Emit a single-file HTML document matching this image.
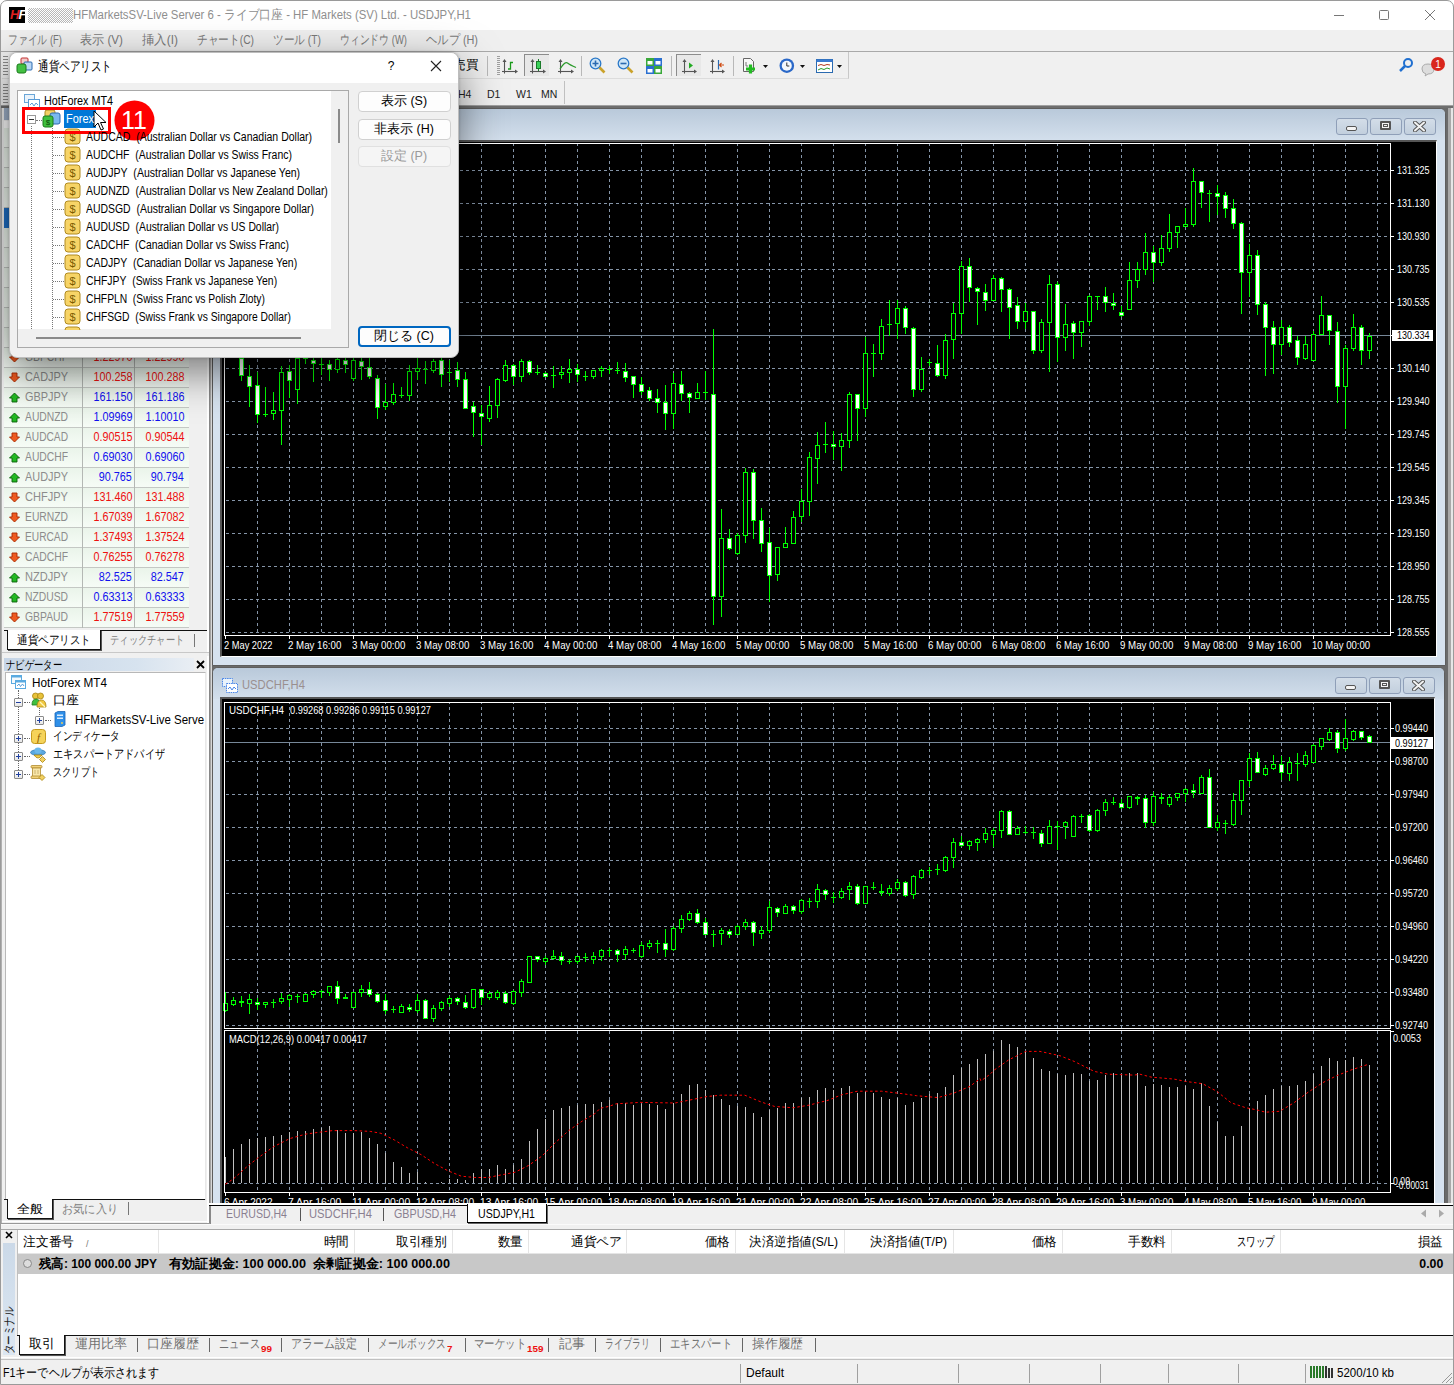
<!DOCTYPE html><html><head><meta charset="utf-8"><style>
html,body{margin:0;padding:0}
body{width:1454px;height:1385px;position:relative;overflow:hidden;background:#f0f0f0;font-family:"Liberation Sans",sans-serif;}
body div{position:absolute;box-sizing:border-box}
.t{white-space:nowrap}
svg{position:absolute}
</style></head><body>
<div style="left:0px;top:0px;width:1454px;height:30px;background:#fff;"></div>
<div style="left:0px;top:0px;width:1454px;height:1385px;border:1px solid #9a9a9a;border-radius:7px 7px 0 0;pointer-events:none;z-index:50;"></div>
<div style="left:9px;top:7px;width:16px;height:16px;background:#000;"></div>
<div class="t" style="left:10px;top:6px;font-size:13px;line-height:18px;font-style:italic;font-weight:bold;letter-spacing:-1px;"><span style="color:#e02020">H</span><span style="color:#fff">F</span></div>
<div style="left:28px;top:8px;width:45px;height:15px;background:repeating-conic-gradient(#b8b8b8 0 25%,#fff 0 50%) 0 0/2px 2px;"></div>
<div class="t" style="top:7.0px;font-size:12.5px;line-height:17px;color:#8f8f8f;left:73px;transform-origin:0 0;transform:scaleX(0.909);">HFMarketsSV-Live Server 6 - ライブ口座 - HF Markets (SV) Ltd. - USDJPY,H1</div>
<div style="left:1334px;top:15px;width:10px;height:1px;background:#777;"></div>
<div style="left:1379px;top:10px;width:10px;height:10px;border:1px solid #777;border-radius:1.5px;"></div>
<svg style="left:1424px;top:9px" width="12" height="12"><path d="M1 1L11 11M11 1L1 11" stroke="#777" stroke-width="1"/></svg>
<div style="left:0px;top:30px;width:1454px;height:21px;background:#f0f0f0;"></div>
<div style="left:0px;top:51px;width:1454px;height:1px;background:#a9a9a9;"></div>
<div class="t" style="top:32.0px;font-size:12.5px;line-height:17px;color:#7a7a7a;left:8px;transform-origin:0 0;transform:scaleX(0.756);">ファイル (F)</div>
<div class="t" style="top:32.0px;font-size:12.5px;line-height:17px;color:#7a7a7a;left:80px;transform-origin:0 0;transform:scaleX(0.932);">表示 (V)</div>
<div class="t" style="top:32.0px;font-size:12.5px;line-height:17px;color:#7a7a7a;left:142px;transform-origin:0 0;transform:scaleX(0.952);">挿入(I)</div>
<div class="t" style="top:32.0px;font-size:12.5px;line-height:17px;color:#7a7a7a;left:197px;transform-origin:0 0;transform:scaleX(0.822);">チャート(C)</div>
<div class="t" style="top:32.0px;font-size:12.5px;line-height:17px;color:#7a7a7a;left:273px;transform-origin:0 0;transform:scaleX(0.821);">ツール (T)</div>
<div class="t" style="top:32.0px;font-size:12.5px;line-height:17px;color:#7a7a7a;left:340px;transform-origin:0 0;transform:scaleX(0.756);">ウィンドウ (W)</div>
<div class="t" style="top:32.0px;font-size:12.5px;line-height:17px;color:#7a7a7a;left:426px;transform-origin:0 0;transform:scaleX(0.869);">ヘルプ (H)</div>
<div style="left:0px;top:52px;width:1454px;height:55px;background:#f0f0f0;"></div>
<div style="left:2px;top:52px;width:847px;height:27px;border-right:1px solid #c8c8c8;border-bottom:1px solid #dcdcdc;"></div>
<div style="left:0px;top:105px;width:1454px;height:1px;background:#a0a0a0;"></div>
<div style="left:0px;top:106px;width:1454px;height:2px;background:#6e6e6e;"></div>
<div style="left:3px;top:56px;width:5px;height:19px;background:repeating-linear-gradient(#8a8a8a 0 1px,transparent 1px 3px);"></div>
<div style="left:3px;top:84px;width:5px;height:19px;background:repeating-linear-gradient(#8a8a8a 0 1px,transparent 1px 3px);"></div>
<div style="left:487px;top:56px;width:1px;height:20px;background:#b8b8b8;"></div>
<div style="left:581px;top:56px;width:1px;height:20px;background:#b8b8b8;"></div>
<div style="left:671px;top:56px;width:1px;height:20px;background:#b8b8b8;"></div>
<div style="left:733px;top:56px;width:1px;height:20px;background:#b8b8b8;"></div>
<div style="left:497px;top:56px;width:3px;height:20px;background:repeating-linear-gradient(#a0a0a0 0 1px,transparent 1px 2px);"></div>
<div class="t" style="top:56.0px;font-size:13px;line-height:18px;color:#000;left:453px;transform-origin:0 0;transform:scaleX(0.962);">売買</div>
<div style="left:524px;top:54px;width:25px;height:22px;background:#e8e8e8;border-top:1px solid #8c8c8c;border-left:1px solid #8c8c8c;"></div>
<div style="left:676px;top:54px;width:25px;height:22px;background:#e8e8e8;border-top:1px solid #8c8c8c;border-left:1px solid #8c8c8c;"></div>

<svg style="left:495px;top:52px" width="360" height="28">
 <defs><marker id="ah" markerWidth="4" markerHeight="4" refX="2" refY="2" orient="auto"><path d="M0 0L4 2 0 4z" fill="#555"/></marker></defs>
 <g stroke="#555" stroke-width="1.1" fill="none">
  <path d="M9.5 21.5V9"/><path d="M7 19.5H21"/>
  <path d="M37.5 21.5V9"/><path d="M35 19.5H49"/>
  <path d="M65.5 21.5V9"/><path d="M63 19.5H77"/>
  <path d="M189.5 21.5V9"/><path d="M187 19.5H200"/>
  <path d="M217.5 21.5V9"/><path d="M215 19.5H228"/>
 </g>
 <g fill="#555"><path d="M7.5 10l2-3 2 3z"/><path d="M20 17.5l3 2-3 2z"/><path d="M35.5 10l2-3 2 3z"/><path d="M48 17.5l3 2-3 2z"/><path d="M63.5 10l2-3 2 3z"/><path d="M76 17.5l3 2-3 2z"/>
 <path d="M187.5 10l2-3 2 3z"/><path d="M199 17.5l3 2-3 2z"/><path d="M215.5 10l2-3 2 3z"/><path d="M227 17.5l3 2-3 2z"/></g>
 <path d="M13 17h2.5V10.5h2.5" stroke="#1a9a1a" stroke-width="1.3" fill="none"/>
 <rect x="41.5" y="9.5" width="4" height="7" fill="#3bd15a" stroke="#1a7a2a"/><path d="M43.5 7v2.5M43.5 16.5V19" stroke="#1a7a2a"/>
 <path d="M65 17Q70 9 72.5 11T81 15.5" stroke="#2a9a2a" stroke-width="1.3" fill="none"/>
 <circle cx="100.5" cy="11.5" r="5.3" fill="#cfe6f7" stroke="#2a78c8" stroke-width="1.3"/><path d="M97.5 11.5h6M100.5 8.5v6" stroke="#2a6ab0" stroke-width="1.6"/><path d="M104.5 15.5l5 5" stroke="#caa22a" stroke-width="2.6"/>
 <circle cx="128.5" cy="11.5" r="5.3" fill="#cfe6f7" stroke="#2a78c8" stroke-width="1.3"/><path d="M125.5 11.5h6" stroke="#2a6ab0" stroke-width="1.6"/><path d="M132.5 15.5l5 5" stroke="#caa22a" stroke-width="2.6"/>
 <rect x="151" y="6" width="8" height="8" fill="#3aa83a"/><rect x="159" y="6" width="8" height="8" fill="#2a6fd0"/><rect x="151" y="14" width="8" height="8" fill="#2a6fd0"/><rect x="159" y="14" width="8" height="8" fill="#3aa83a"/>
 <rect x="152.5" y="9" width="5" height="3.5" fill="#fff"/><rect x="160.5" y="9" width="5" height="3.5" fill="#fff"/><rect x="152.5" y="17" width="5" height="3.5" fill="#fff"/><rect x="160.5" y="17" width="5" height="3.5" fill="#fff"/>
 <path d="M194 10.5v6l4-3z" fill="#22aa22"/>
 <path d="M223.5 8v9.5" stroke="#2a6ab0" stroke-width="1.2"/><path d="M229 13h-4M226.5 11l-2 2 2 2" stroke="#d04a10" stroke-width="1.1" fill="none"/>
 <path d="M248.5 6.5h7l3 3v10h-10z" fill="#f8f8f8" stroke="#666"/><path d="M251 10v4h2" stroke="#777" fill="none"/>
 <path d="M255.5 12.5v9M251 17h9" stroke="#22bb22" stroke-width="3.2"/>
 <path d="M268 13h5l-2.5 3z" fill="#111"/>
 <circle cx="291.8" cy="13.7" r="7.3" fill="#2a68c8"/><circle cx="291.8" cy="13.7" r="5" fill="#f4f8fc"/><path d="M291.8 10.5v3.5h2.5" stroke="#333" fill="none"/>
 <path d="M305 13h5l-2.5 3z" fill="#111"/>
 <rect x="321.5" y="7.5" width="16" height="13" fill="#fff" stroke="#2a6ab0"/><rect x="321.5" y="7.5" width="16" height="2.5" fill="#3a7ad0"/><path d="M323 13.5l3-1 3 1 3-1 3 0.5" stroke="#b03a20" fill="none"/><path d="M323 18l3-1.5 3 1 3-1.5 3 1" stroke="#2a9a2a" fill="none"/>
 <path d="M342 13h5l-2.5 3z" fill="#111"/>
</svg>
<div class="t" style="top:86.5px;font-size:10.5px;line-height:14px;color:#222;left:458px;transform-origin:0 0;">H4</div>
<div class="t" style="top:86.5px;font-size:10.5px;line-height:14px;color:#222;left:487px;transform-origin:0 0;">D1</div>
<div class="t" style="top:86.5px;font-size:10.5px;line-height:14px;color:#222;left:516px;transform-origin:0 0;">W1</div>
<div class="t" style="top:86.5px;font-size:10.5px;line-height:14px;color:#222;left:541px;transform-origin:0 0;">MN</div>
<div style="left:564px;top:81px;width:1px;height:23px;background:#c0c0c0;"></div>
<svg style="left:1395px;top:56px" width="55" height="22"><circle cx="13" cy="7" r="4" fill="none" stroke="#1f6fd0" stroke-width="2"/><path d="M10 10l-5 5" stroke="#1f6fd0" stroke-width="2.5"/><path d="M27 13q0-5 6-5t6 5-6 5l-3 2 1-2q-4-1-4-5z" fill="#ddd" stroke="#aaa"/><circle cx="43" cy="8" r="7" fill="#d9261c"/><text x="43" y="12" font-size="10" fill="#fff" text-anchor="middle" font-family="Liberation Sans">1</text></svg>
<div style="left:0px;top:108px;width:210px;height:1117px;background:#f0f0f0;"></div>
<div style="left:0px;top:108px;width:2px;height:1117px;background:#b0b0b0;"></div>
<div style="left:207px;top:108px;width:2px;height:1116px;background:#fff;"></div>
<div style="left:209px;top:108px;width:2px;height:1116px;background:linear-gradient(90deg,#7a7a7a,#b0b0b0);"></div>
<div style="left:211px;top:108px;width:1px;height:1116px;background:#d8d8d8;"></div>
<div style="left:4px;top:140px;width:185px;height:487px;background:linear-gradient(90deg,#f6fbf6,#e9f5e9);"></div>
<div style="left:4px;top:108px;width:203px;height:12px;background:linear-gradient(90deg,#9fb1c9,#c9d6e6);"></div>
<div style="left:4px;top:121px;width:185px;height:25px;background:#fff;border-bottom:1px solid #c8c8c8;"></div>
<div style="left:4px;top:128px;width:185px;height:20px;background:linear-gradient(#eaf4ea,#f6fcf6);border-bottom:1px solid #c4c8c4;"></div>
<div style="left:4px;top:148px;width:185px;height:20px;background:linear-gradient(#eaf4ea,#f6fcf6);border-bottom:1px solid #c4c8c4;"></div>
<div style="left:4px;top:168px;width:185px;height:20px;background:linear-gradient(#eaf4ea,#f6fcf6);border-bottom:1px solid #c4c8c4;"></div>
<div style="left:4px;top:188px;width:185px;height:20px;background:linear-gradient(#eaf4ea,#f6fcf6);border-bottom:1px solid #c4c8c4;"></div>
<div style="left:4px;top:208px;width:185px;height:20px;background:linear-gradient(#eaf4ea,#f6fcf6);border-bottom:1px solid #c4c8c4;"></div>
<div style="left:4px;top:228px;width:185px;height:20px;background:linear-gradient(#eaf4ea,#f6fcf6);border-bottom:1px solid #c4c8c4;"></div>
<div style="left:4px;top:248px;width:185px;height:20px;background:linear-gradient(#eaf4ea,#f6fcf6);border-bottom:1px solid #c4c8c4;"></div>
<div style="left:4px;top:268px;width:185px;height:20px;background:linear-gradient(#eaf4ea,#f6fcf6);border-bottom:1px solid #c4c8c4;"></div>
<div style="left:4px;top:288px;width:185px;height:20px;background:linear-gradient(#eaf4ea,#f6fcf6);border-bottom:1px solid #c4c8c4;"></div>
<div style="left:4px;top:308px;width:185px;height:20px;background:linear-gradient(#eaf4ea,#f6fcf6);border-bottom:1px solid #c4c8c4;"></div>
<div style="left:4px;top:328px;width:185px;height:20px;background:linear-gradient(#eaf4ea,#f6fcf6);border-bottom:1px solid #c4c8c4;"></div>
<div style="left:4px;top:208px;width:185px;height:20px;background:#1f6fc5;"></div>
<div style="left:4px;top:348px;width:185px;height:20px;background:linear-gradient(#eaf4ea,#f6fcf6);border-bottom:1px solid #c4c8c4;"></div>
<svg style="left:9px;top:351.5px" width="11" height="11"><path d="M3 1h5v4h2.5L5.5 10 0.5 5H3z" fill="#ee5a20" stroke="#a82800" stroke-width="0.9"/></svg>
<div class="t" style="top:348.5px;font-size:12px;line-height:16px;color:#8c8c8c;left:25px;transform-origin:0 0;transform:scaleX(0.860);">GBPCHF</div>
<div class="t" style="top:348.5px;font-size:12px;line-height:16px;color:#ee1111;right:1322px;transform-origin:100% 0;transform:scaleX(0.899);">1.22970</div>
<div class="t" style="top:348.5px;font-size:12px;line-height:16px;color:#ee1111;right:1270px;transform-origin:100% 0;transform:scaleX(0.899);">1.22990</div>
<div style="left:4px;top:368px;width:185px;height:20px;background:linear-gradient(#eaf4ea,#f6fcf6);border-bottom:1px solid #c4c8c4;"></div>
<svg style="left:9px;top:371.5px" width="11" height="11"><path d="M3 1h5v4h2.5L5.5 10 0.5 5H3z" fill="#ee5a20" stroke="#a82800" stroke-width="0.9"/></svg>
<div class="t" style="top:368.5px;font-size:12px;line-height:16px;color:#8c8c8c;left:25px;transform-origin:0 0;transform:scaleX(0.908);">CADJPY</div>
<div class="t" style="top:368.5px;font-size:12px;line-height:16px;color:#ee1111;right:1322px;transform-origin:100% 0;transform:scaleX(0.899);">100.258</div>
<div class="t" style="top:368.5px;font-size:12px;line-height:16px;color:#ee1111;right:1270px;transform-origin:100% 0;transform:scaleX(0.899);">100.288</div>
<div style="left:4px;top:388px;width:185px;height:20px;background:linear-gradient(#eaf4ea,#f6fcf6);border-bottom:1px solid #c4c8c4;"></div>
<svg style="left:9px;top:391.5px" width="11" height="11"><path d="M3 10h5V6h2.5L5.5 1 0.5 6H3z" fill="#22b822" stroke="#0a600a" stroke-width="0.9"/></svg>
<div class="t" style="top:388.5px;font-size:12px;line-height:16px;color:#8c8c8c;left:25px;transform-origin:0 0;transform:scaleX(0.908);">GBPJPY</div>
<div class="t" style="top:388.5px;font-size:12px;line-height:16px;color:#1111ee;right:1322px;transform-origin:100% 0;transform:scaleX(0.899);">161.150</div>
<div class="t" style="top:388.5px;font-size:12px;line-height:16px;color:#1111ee;right:1270px;transform-origin:100% 0;transform:scaleX(0.899);">161.186</div>
<div style="left:4px;top:408px;width:185px;height:20px;background:linear-gradient(#eaf4ea,#f6fcf6);border-bottom:1px solid #c4c8c4;"></div>
<svg style="left:9px;top:411.5px" width="11" height="11"><path d="M3 10h5V6h2.5L5.5 1 0.5 6H3z" fill="#22b822" stroke="#0a600a" stroke-width="0.9"/></svg>
<div class="t" style="top:408.5px;font-size:12px;line-height:16px;color:#8c8c8c;left:25px;transform-origin:0 0;transform:scaleX(0.860);">AUDNZD</div>
<div class="t" style="top:408.5px;font-size:12px;line-height:16px;color:#1111ee;right:1322px;transform-origin:100% 0;transform:scaleX(0.899);">1.09969</div>
<div class="t" style="top:408.5px;font-size:12px;line-height:16px;color:#1111ee;right:1270px;transform-origin:100% 0;transform:scaleX(0.899);">1.10010</div>
<div style="left:4px;top:428px;width:185px;height:20px;background:linear-gradient(#eaf4ea,#f6fcf6);border-bottom:1px solid #c4c8c4;"></div>
<svg style="left:9px;top:431.5px" width="11" height="11"><path d="M3 1h5v4h2.5L5.5 10 0.5 5H3z" fill="#ee5a20" stroke="#a82800" stroke-width="0.9"/></svg>
<div class="t" style="top:428.5px;font-size:12px;line-height:16px;color:#8c8c8c;left:25px;transform-origin:0 0;transform:scaleX(0.849);">AUDCAD</div>
<div class="t" style="top:428.5px;font-size:12px;line-height:16px;color:#ee1111;right:1322px;transform-origin:100% 0;transform:scaleX(0.899);">0.90515</div>
<div class="t" style="top:428.5px;font-size:12px;line-height:16px;color:#ee1111;right:1270px;transform-origin:100% 0;transform:scaleX(0.899);">0.90544</div>
<div style="left:4px;top:448px;width:185px;height:20px;background:linear-gradient(#eaf4ea,#f6fcf6);border-bottom:1px solid #c4c8c4;"></div>
<svg style="left:9px;top:451.5px" width="11" height="11"><path d="M3 10h5V6h2.5L5.5 1 0.5 6H3z" fill="#22b822" stroke="#0a600a" stroke-width="0.9"/></svg>
<div class="t" style="top:448.5px;font-size:12px;line-height:16px;color:#8c8c8c;left:25px;transform-origin:0 0;transform:scaleX(0.860);">AUDCHF</div>
<div class="t" style="top:448.5px;font-size:12px;line-height:16px;color:#1111ee;right:1322px;transform-origin:100% 0;transform:scaleX(0.899);">0.69030</div>
<div class="t" style="top:448.5px;font-size:12px;line-height:16px;color:#1111ee;right:1270px;transform-origin:100% 0;transform:scaleX(0.899);">0.69060</div>
<div style="left:4px;top:468px;width:185px;height:20px;background:linear-gradient(#eaf4ea,#f6fcf6);border-bottom:1px solid #c4c8c4;"></div>
<svg style="left:9px;top:471.5px" width="11" height="11"><path d="M3 10h5V6h2.5L5.5 1 0.5 6H3z" fill="#22b822" stroke="#0a600a" stroke-width="0.9"/></svg>
<div class="t" style="top:468.5px;font-size:12px;line-height:16px;color:#8c8c8c;left:25px;transform-origin:0 0;transform:scaleX(0.908);">AUDJPY</div>
<div class="t" style="top:468.5px;font-size:12px;line-height:16px;color:#1111ee;right:1322px;transform-origin:100% 0;transform:scaleX(0.899);">90.765</div>
<div class="t" style="top:468.5px;font-size:12px;line-height:16px;color:#1111ee;right:1270px;transform-origin:100% 0;transform:scaleX(0.899);">90.794</div>
<div style="left:4px;top:488px;width:185px;height:20px;background:linear-gradient(#eaf4ea,#f6fcf6);border-bottom:1px solid #c4c8c4;"></div>
<svg style="left:9px;top:491.5px" width="11" height="11"><path d="M3 1h5v4h2.5L5.5 10 0.5 5H3z" fill="#ee5a20" stroke="#a82800" stroke-width="0.9"/></svg>
<div class="t" style="top:488.5px;font-size:12px;line-height:16px;color:#8c8c8c;left:25px;transform-origin:0 0;transform:scaleX(0.921);">CHFJPY</div>
<div class="t" style="top:488.5px;font-size:12px;line-height:16px;color:#ee1111;right:1322px;transform-origin:100% 0;transform:scaleX(0.899);">131.460</div>
<div class="t" style="top:488.5px;font-size:12px;line-height:16px;color:#ee1111;right:1270px;transform-origin:100% 0;transform:scaleX(0.899);">131.488</div>
<div style="left:4px;top:508px;width:185px;height:20px;background:linear-gradient(#eaf4ea,#f6fcf6);border-bottom:1px solid #c4c8c4;"></div>
<svg style="left:9px;top:511.5px" width="11" height="11"><path d="M3 1h5v4h2.5L5.5 10 0.5 5H3z" fill="#ee5a20" stroke="#a82800" stroke-width="0.9"/></svg>
<div class="t" style="top:508.5px;font-size:12px;line-height:16px;color:#8c8c8c;left:25px;transform-origin:0 0;transform:scaleX(0.860);">EURNZD</div>
<div class="t" style="top:508.5px;font-size:12px;line-height:16px;color:#ee1111;right:1322px;transform-origin:100% 0;transform:scaleX(0.899);">1.67039</div>
<div class="t" style="top:508.5px;font-size:12px;line-height:16px;color:#ee1111;right:1270px;transform-origin:100% 0;transform:scaleX(0.899);">1.67082</div>
<div style="left:4px;top:528px;width:185px;height:20px;background:linear-gradient(#eaf4ea,#f6fcf6);border-bottom:1px solid #c4c8c4;"></div>
<svg style="left:9px;top:531.5px" width="11" height="11"><path d="M3 1h5v4h2.5L5.5 10 0.5 5H3z" fill="#ee5a20" stroke="#a82800" stroke-width="0.9"/></svg>
<div class="t" style="top:528.5px;font-size:12px;line-height:16px;color:#8c8c8c;left:25px;transform-origin:0 0;transform:scaleX(0.849);">EURCAD</div>
<div class="t" style="top:528.5px;font-size:12px;line-height:16px;color:#ee1111;right:1322px;transform-origin:100% 0;transform:scaleX(0.899);">1.37493</div>
<div class="t" style="top:528.5px;font-size:12px;line-height:16px;color:#ee1111;right:1270px;transform-origin:100% 0;transform:scaleX(0.899);">1.37524</div>
<div style="left:4px;top:548px;width:185px;height:20px;background:linear-gradient(#eaf4ea,#f6fcf6);border-bottom:1px solid #c4c8c4;"></div>
<svg style="left:9px;top:551.5px" width="11" height="11"><path d="M3 1h5v4h2.5L5.5 10 0.5 5H3z" fill="#ee5a20" stroke="#a82800" stroke-width="0.9"/></svg>
<div class="t" style="top:548.5px;font-size:12px;line-height:16px;color:#8c8c8c;left:25px;transform-origin:0 0;transform:scaleX(0.860);">CADCHF</div>
<div class="t" style="top:548.5px;font-size:12px;line-height:16px;color:#ee1111;right:1322px;transform-origin:100% 0;transform:scaleX(0.899);">0.76255</div>
<div class="t" style="top:548.5px;font-size:12px;line-height:16px;color:#ee1111;right:1270px;transform-origin:100% 0;transform:scaleX(0.899);">0.76278</div>
<div style="left:4px;top:568px;width:185px;height:20px;background:linear-gradient(#eaf4ea,#f6fcf6);border-bottom:1px solid #c4c8c4;"></div>
<svg style="left:9px;top:571.5px" width="11" height="11"><path d="M3 10h5V6h2.5L5.5 1 0.5 6H3z" fill="#22b822" stroke="#0a600a" stroke-width="0.9"/></svg>
<div class="t" style="top:568.5px;font-size:12px;line-height:16px;color:#8c8c8c;left:25px;transform-origin:0 0;transform:scaleX(0.921);">NZDJPY</div>
<div class="t" style="top:568.5px;font-size:12px;line-height:16px;color:#1111ee;right:1322px;transform-origin:100% 0;transform:scaleX(0.899);">82.525</div>
<div class="t" style="top:568.5px;font-size:12px;line-height:16px;color:#1111ee;right:1270px;transform-origin:100% 0;transform:scaleX(0.899);">82.547</div>
<div style="left:4px;top:588px;width:185px;height:20px;background:linear-gradient(#eaf4ea,#f6fcf6);border-bottom:1px solid #c4c8c4;"></div>
<svg style="left:9px;top:591.5px" width="11" height="11"><path d="M3 10h5V6h2.5L5.5 1 0.5 6H3z" fill="#22b822" stroke="#0a600a" stroke-width="0.9"/></svg>
<div class="t" style="top:588.5px;font-size:12px;line-height:16px;color:#8c8c8c;left:25px;transform-origin:0 0;transform:scaleX(0.860);">NZDUSD</div>
<div class="t" style="top:588.5px;font-size:12px;line-height:16px;color:#1111ee;right:1322px;transform-origin:100% 0;transform:scaleX(0.899);">0.63313</div>
<div class="t" style="top:588.5px;font-size:12px;line-height:16px;color:#1111ee;right:1270px;transform-origin:100% 0;transform:scaleX(0.899);">0.63333</div>
<div style="left:4px;top:608px;width:185px;height:20px;background:linear-gradient(#eaf4ea,#f6fcf6);border-bottom:1px solid #c4c8c4;"></div>
<svg style="left:9px;top:611.5px" width="11" height="11"><path d="M3 1h5v4h2.5L5.5 10 0.5 5H3z" fill="#ee5a20" stroke="#a82800" stroke-width="0.9"/></svg>
<div class="t" style="top:608.5px;font-size:12px;line-height:16px;color:#8c8c8c;left:25px;transform-origin:0 0;transform:scaleX(0.864);">GBPAUD</div>
<div class="t" style="top:608.5px;font-size:12px;line-height:16px;color:#ee1111;right:1322px;transform-origin:100% 0;transform:scaleX(0.899);">1.77519</div>
<div class="t" style="top:608.5px;font-size:12px;line-height:16px;color:#ee1111;right:1270px;transform-origin:100% 0;transform:scaleX(0.899);">1.77559</div>
<div style="left:82px;top:121px;width:1px;height:507px;background:#b4b8b4;"></div>
<div style="left:134px;top:121px;width:1px;height:507px;background:#b4b8b4;"></div>
<div style="left:4px;top:630px;width:203px;height:1px;background:#111;"></div>
<div style="left:7px;top:630px;width:94px;height:20px;background:#fff;border:1px solid #111;border-top:none;box-shadow:1px 1px 0 #555;"></div>
<div class="t" style="top:632.0px;font-size:12px;line-height:16px;color:#000;left:17px;transform-origin:0 0;transform:scaleX(0.881);">通貨ペアリスト</div>
<div class="t" style="top:632.0px;font-size:12px;line-height:16px;color:#808080;left:110px;transform-origin:0 0;transform:scaleX(0.771);">ティックチャート</div>
<div style="left:194px;top:634px;width:1px;height:13px;background:#777;"></div>
<div style="left:2px;top:652px;width:207px;height:1px;background:#c8c8c8;"></div>
<div style="left:2px;top:653px;width:207px;height:3px;background:#f0f0f0;"></div>
<div style="left:4px;top:658px;width:190px;height:13px;background:linear-gradient(90deg,#c6d5e6,#d7e3ef 70%,#e9eef4);"></div>
<div class="t" style="top:656.5px;font-size:11.5px;line-height:16px;color:#000;left:6px;transform-origin:0 0;transform:scaleX(0.778);">ナビゲーター</div>
<svg style="left:196px;top:660px" width="9" height="9"><path d="M1 1L8 8M8 1L1 8" stroke="#000" stroke-width="1.8"/></svg>
<div style="left:5px;top:672px;width:201px;height:528px;background:#fff;border:1px solid #b8b8b8;border-right-color:#e8e8e8;"></div>
<svg style="left:11px;top:675px" width="15" height="14"><rect x="0.5" y="0.5" width="10" height="8" fill="#f4f9fd" stroke="#5aaae0"/><rect x="0.5" y="0.5" width="10" height="2" fill="#5aaae0"/><rect x="4.5" y="5.5" width="10" height="8" fill="#fff" stroke="#5aaae0"/><rect x="4.5" y="5.5" width="10" height="2" fill="#5aaae0"/><path d="M6 11l2-2 1.5 2.5 2-2.5 1.5 2" stroke="#3a8ad0" fill="none" stroke-width="0.8"/></svg>
<div class="t" style="top:675.0px;font-size:12px;line-height:16px;color:#000;left:32px;transform-origin:0 0;transform:scaleX(0.978);">HotForex MT4</div>
<div style="left:18px;top:690px;width:1px;height:84px;border-left:1px dotted #666;"></div>
<div style="left:39px;top:708px;width:1px;height:9px;border-left:1px dotted #666;"></div>
<div style="left:14px;top:698px;width:9px;height:9px;background:linear-gradient(#fff,#e6e6e6);border:1px solid #8a8a8a;border-radius:1px;"></div>
<div style="left:16px;top:702px;width:5px;height:1px;background:#1f3f9f;"></div>
<div style="left:24px;top:702px;width:6px;height:1px;border-top:1px dotted #666;"></div>
<div style="left:35px;top:716px;width:9px;height:9px;background:linear-gradient(#fff,#e6e6e6);border:1px solid #8a8a8a;border-radius:1px;"></div>
<div style="left:37px;top:720px;width:5px;height:1px;background:#1f3f9f;"></div>
<div style="left:39px;top:718px;width:1px;height:5px;background:#1f3f9f;"></div>
<div style="left:45px;top:720px;width:6px;height:1px;border-top:1px dotted #666;"></div>
<div style="left:14px;top:734px;width:9px;height:9px;background:linear-gradient(#fff,#e6e6e6);border:1px solid #8a8a8a;border-radius:1px;"></div>
<div style="left:16px;top:738px;width:5px;height:1px;background:#1f3f9f;"></div>
<div style="left:18px;top:736px;width:1px;height:5px;background:#1f3f9f;"></div>
<div style="left:24px;top:738px;width:6px;height:1px;border-top:1px dotted #666;"></div>
<div style="left:14px;top:752px;width:9px;height:9px;background:linear-gradient(#fff,#e6e6e6);border:1px solid #8a8a8a;border-radius:1px;"></div>
<div style="left:16px;top:756px;width:5px;height:1px;background:#1f3f9f;"></div>
<div style="left:18px;top:754px;width:1px;height:5px;background:#1f3f9f;"></div>
<div style="left:24px;top:756px;width:6px;height:1px;border-top:1px dotted #666;"></div>
<div style="left:14px;top:770px;width:9px;height:9px;background:linear-gradient(#fff,#e6e6e6);border:1px solid #8a8a8a;border-radius:1px;"></div>
<div style="left:16px;top:774px;width:5px;height:1px;background:#1f3f9f;"></div>
<div style="left:18px;top:772px;width:1px;height:5px;background:#1f3f9f;"></div>
<div style="left:24px;top:774px;width:6px;height:1px;border-top:1px dotted #666;"></div>
<svg style="left:30px;top:692px" width="18" height="17"><circle cx="5.5" cy="4" r="3" fill="#e8c23a" stroke="#a88410" stroke-width="0.8"/><circle cx="10.5" cy="4" r="3" fill="#e8c23a" stroke="#a88410" stroke-width="0.8"/><path d="M2 13q0-6 4-6t4 6z" fill="#3fbf3f" stroke="#1a7a1a" stroke-width="0.8"/><path d="M7 15q0-7 4.5-7t4.5 7z" fill="#f0c840" stroke="#a88410" stroke-width="0.8"/><path d="M10 10l5 5" stroke="#fff7c0" stroke-width="1.2"/></svg>
<div class="t" style="top:692.0px;font-size:12px;line-height:16px;color:#000;left:53px;transform-origin:0 0;transform:scaleX(1.083);">口座</div>
<svg style="left:54px;top:711px" width="12" height="16"><path d="M1 2l3-1.5h7V14l-3 1.5H1z" fill="#2f8fe8" stroke="#1a64b8" stroke-width="0.8"/><rect x="3" y="3.5" width="6" height="1.5" fill="#d8ecff"/><rect x="3" y="6.5" width="6" height="1.5" fill="#d8ecff"/><circle cx="8" cy="12" r="0.9" fill="#ffd24a"/></svg>
<div class="t" style="top:711.5px;font-size:12px;line-height:16px;color:#000;left:75px;transform-origin:0 0;transform:scaleX(0.958);">HFMarketsSV-Live Serve</div>
<svg style="left:31px;top:729px" width="15" height="15"><rect x="0.5" y="0.5" width="14" height="14" rx="3" fill="#f5d35a" stroke="#c49a1c"/><text x="7.5" y="12" font-size="11" fill="#8a5a00" text-anchor="middle" font-style="italic" font-family="Liberation Serif">f</text></svg>
<div class="t" style="top:727.8px;font-size:12px;line-height:16px;color:#000;left:53px;transform-origin:0 0;transform:scaleX(0.798);">インディケータ</div>
<svg style="left:30px;top:747px" width="18" height="16"><ellipse cx="8" cy="5.5" rx="7.5" ry="2.8" fill="#5aa8e0" stroke="#2f7ab8" stroke-width="0.8"/><ellipse cx="8" cy="3.5" rx="3.5" ry="3" fill="#6ab8ec"/><path d="M4 8q4 6 8 0z" fill="#f2cc4a" stroke="#a88410" stroke-width="0.8"/><path d="M12.5 9.5l3 3-3 3-3-3z" fill="#f2d060" stroke="#a88410" stroke-width="0.8"/></svg>
<div class="t" style="top:745.8px;font-size:12px;line-height:16px;color:#000;left:53px;transform-origin:0 0;transform:scaleX(0.848);">エキスパートアドバイザ</div>
<svg style="left:30px;top:765px" width="17" height="16"><rect x="1" y="0.5" width="11" height="2.5" rx="1" fill="#f2d27a" stroke="#b08a30" stroke-width="0.8"/><rect x="2.5" y="3" width="8" height="9" fill="#f8e6a8" stroke="#b08a30" stroke-width="0.8"/><rect x="1" y="11" width="11" height="2.5" rx="1" fill="#f2d27a" stroke="#b08a30" stroke-width="0.8"/><path d="M4.5 6h1M7.5 6h1M4.5 8h1M7.5 8h1" stroke="#a08040"/><path d="M12 9.5l3 3-3 3-3-3z" fill="#f2d060" stroke="#a88410" stroke-width="0.8"/></svg>
<div class="t" style="top:763.8px;font-size:12px;line-height:16px;color:#000;left:53px;transform-origin:0 0;transform:scaleX(0.767);">スクリプト</div>
<div style="left:4px;top:1199px;width:201px;height:1px;background:#111;"></div>
<div style="left:7px;top:1199px;width:46px;height:20px;background:#fff;border:1px solid #111;border-top:none;box-shadow:1px 1px 0 #555;"></div>
<div class="t" style="top:1201.0px;font-size:12px;line-height:16px;color:#000;left:17px;transform-origin:0 0;transform:scaleX(1.083);">全般</div>
<div class="t" style="top:1200.5px;font-size:12px;line-height:16px;color:#808080;left:62px;transform-origin:0 0;transform:scaleX(0.933);">お気に入り</div>
<div style="left:128px;top:1202px;width:1px;height:13px;background:#777;"></div>
<div style="left:2px;top:1221px;width:205px;height:1px;background:#fff;"></div>
<div style="left:212px;top:108px;width:1234px;height:1097px;background:#6a6a6a;"></div>
<div style="left:212px;top:108px;width:1234px;height:558px;background:#d6e2ef;border:1px solid #5e5e5e;border-radius:6px 6px 0 0;"></div>
<div style="left:213px;top:109px;width:1232px;height:31px;background:linear-gradient(#b9c9da,#d3dfec);border-radius:5px 5px 0 0;"></div>
<div style="left:1336px;top:118px;width:32px;height:17px;border:1px solid #8f9fb8;border-radius:3px;background:linear-gradient(#d3dde8,#c2cfdd);"></div>
<div style="left:1346px;top:126px;width:11px;height:5px;background:#f4f4f4;border:1px solid #555;border-radius:2px;"></div>
<div style="left:1370px;top:118px;width:32px;height:17px;border:1px solid #8f9fb8;border-radius:3px;background:linear-gradient(#d3dde8,#c2cfdd);"></div>
<div style="left:1380px;top:121px;width:11px;height:9px;background:#f4f4f4;border:2px solid #555;border-radius:1px;"></div><div style="left:1383px;top:124px;width:5px;height:3px;border:1px solid #555;"></div>
<div style="left:1404px;top:118px;width:32px;height:17px;border:1px solid #8f9fb8;border-radius:3px;background:linear-gradient(#d3dde8,#c2cfdd);"></div>
<svg style="left:1413px;top:121px" width="13" height="11"><path d="M2 1.5L11 9.5M11 1.5L2 9.5" stroke="#555" stroke-width="4" stroke-linecap="round"/><path d="M2 1.5L11 9.5M11 1.5L2 9.5" stroke="#f2f2f2" stroke-width="2" stroke-linecap="round"/></svg>
<svg style="left:222px;top:119px" width="16" height="15"><rect x="0.5" y="0.5" width="10" height="8" fill="#eaf3fb" stroke="#4a86e8" stroke-dasharray="1.5 0.8"/><rect x="4.5" y="5.5" width="11" height="9" fill="#fff" stroke="#4a86e8" stroke-dasharray="1.5 0.8"/><path d="M6 11l2-2 2 3 2-3 2 2" stroke="#4a86e8" fill="none"/></svg>
<div class="t" style="top:118.0px;font-size:12px;line-height:16px;color:#9a8f8f;left:242px;transform-origin:0 0;transform:scaleX(0.977);">USDJPY,H1</div>
<div style="left:220px;top:140px;width:1217px;height:517px;background:#000;border-left:2px solid #555;border-top:2px solid #555;border-right:1px solid #fff;border-bottom:1px solid #fff;"></div>
<svg style="left:222px;top:142px" width="1214" height="514" shape-rendering="crispEdges"><line x1="4" y1="28.5" x2="1168" y2="28.5" stroke="#8595a8" stroke-dasharray="3 3" stroke-dashoffset="0"/><line x1="4" y1="61.5" x2="1168" y2="61.5" stroke="#8595a8" stroke-dasharray="3 3" stroke-dashoffset="0"/><line x1="4" y1="94.5" x2="1168" y2="94.5" stroke="#8595a8" stroke-dasharray="3 3" stroke-dashoffset="0"/><line x1="4" y1="127.5" x2="1168" y2="127.5" stroke="#8595a8" stroke-dasharray="3 3" stroke-dashoffset="0"/><line x1="4" y1="160.5" x2="1168" y2="160.5" stroke="#8595a8" stroke-dasharray="3 3" stroke-dashoffset="0"/><line x1="4" y1="193.5" x2="1168" y2="193.5" stroke="#8595a8" stroke-dasharray="3 3" stroke-dashoffset="0"/><line x1="4" y1="226.5" x2="1168" y2="226.5" stroke="#8595a8" stroke-dasharray="3 3" stroke-dashoffset="0"/><line x1="4" y1="259.5" x2="1168" y2="259.5" stroke="#8595a8" stroke-dasharray="3 3" stroke-dashoffset="0"/><line x1="4" y1="292.5" x2="1168" y2="292.5" stroke="#8595a8" stroke-dasharray="3 3" stroke-dashoffset="0"/><line x1="4" y1="325.5" x2="1168" y2="325.5" stroke="#8595a8" stroke-dasharray="3 3" stroke-dashoffset="0"/><line x1="4" y1="358.5" x2="1168" y2="358.5" stroke="#8595a8" stroke-dasharray="3 3" stroke-dashoffset="0"/><line x1="4" y1="391.5" x2="1168" y2="391.5" stroke="#8595a8" stroke-dasharray="3 3" stroke-dashoffset="0"/><line x1="4" y1="424.5" x2="1168" y2="424.5" stroke="#8595a8" stroke-dasharray="3 3" stroke-dashoffset="0"/><line x1="4" y1="457.5" x2="1168" y2="457.5" stroke="#8595a8" stroke-dasharray="3 3" stroke-dashoffset="0"/><line x1="4" y1="490.5" x2="1168" y2="490.5" stroke="#8595a8" stroke-dasharray="3 3" stroke-dashoffset="0"/><line x1="35.5" y1="1" x2="35.5" y2="493" stroke="#8595a8" stroke-dasharray="3 3" stroke-dashoffset="0"/><line x1="67.5" y1="1" x2="67.5" y2="493" stroke="#8595a8" stroke-dasharray="3 3" stroke-dashoffset="0"/><line x1="99.5" y1="1" x2="99.5" y2="493" stroke="#8595a8" stroke-dasharray="3 3" stroke-dashoffset="0"/><line x1="131.5" y1="1" x2="131.5" y2="493" stroke="#8595a8" stroke-dasharray="3 3" stroke-dashoffset="0"/><line x1="163.5" y1="1" x2="163.5" y2="493" stroke="#8595a8" stroke-dasharray="3 3" stroke-dashoffset="0"/><line x1="195.5" y1="1" x2="195.5" y2="493" stroke="#8595a8" stroke-dasharray="3 3" stroke-dashoffset="0"/><line x1="227.5" y1="1" x2="227.5" y2="493" stroke="#8595a8" stroke-dasharray="3 3" stroke-dashoffset="0"/><line x1="259.5" y1="1" x2="259.5" y2="493" stroke="#8595a8" stroke-dasharray="3 3" stroke-dashoffset="0"/><line x1="291.5" y1="1" x2="291.5" y2="493" stroke="#8595a8" stroke-dasharray="3 3" stroke-dashoffset="0"/><line x1="323.5" y1="1" x2="323.5" y2="493" stroke="#8595a8" stroke-dasharray="3 3" stroke-dashoffset="0"/><line x1="355.5" y1="1" x2="355.5" y2="493" stroke="#8595a8" stroke-dasharray="3 3" stroke-dashoffset="0"/><line x1="387.5" y1="1" x2="387.5" y2="493" stroke="#8595a8" stroke-dasharray="3 3" stroke-dashoffset="0"/><line x1="419.5" y1="1" x2="419.5" y2="493" stroke="#8595a8" stroke-dasharray="3 3" stroke-dashoffset="0"/><line x1="451.5" y1="1" x2="451.5" y2="493" stroke="#8595a8" stroke-dasharray="3 3" stroke-dashoffset="0"/><line x1="483.5" y1="1" x2="483.5" y2="493" stroke="#8595a8" stroke-dasharray="3 3" stroke-dashoffset="0"/><line x1="515.5" y1="1" x2="515.5" y2="493" stroke="#8595a8" stroke-dasharray="3 3" stroke-dashoffset="0"/><line x1="547.5" y1="1" x2="547.5" y2="493" stroke="#8595a8" stroke-dasharray="3 3" stroke-dashoffset="0"/><line x1="579.5" y1="1" x2="579.5" y2="493" stroke="#8595a8" stroke-dasharray="3 3" stroke-dashoffset="0"/><line x1="611.5" y1="1" x2="611.5" y2="493" stroke="#8595a8" stroke-dasharray="3 3" stroke-dashoffset="0"/><line x1="643.5" y1="1" x2="643.5" y2="493" stroke="#8595a8" stroke-dasharray="3 3" stroke-dashoffset="0"/><line x1="675.5" y1="1" x2="675.5" y2="493" stroke="#8595a8" stroke-dasharray="3 3" stroke-dashoffset="0"/><line x1="707.5" y1="1" x2="707.5" y2="493" stroke="#8595a8" stroke-dasharray="3 3" stroke-dashoffset="0"/><line x1="739.5" y1="1" x2="739.5" y2="493" stroke="#8595a8" stroke-dasharray="3 3" stroke-dashoffset="0"/><line x1="771.5" y1="1" x2="771.5" y2="493" stroke="#8595a8" stroke-dasharray="3 3" stroke-dashoffset="0"/><line x1="803.5" y1="1" x2="803.5" y2="493" stroke="#8595a8" stroke-dasharray="3 3" stroke-dashoffset="0"/><line x1="835.5" y1="1" x2="835.5" y2="493" stroke="#8595a8" stroke-dasharray="3 3" stroke-dashoffset="0"/><line x1="867.5" y1="1" x2="867.5" y2="493" stroke="#8595a8" stroke-dasharray="3 3" stroke-dashoffset="0"/><line x1="899.5" y1="1" x2="899.5" y2="493" stroke="#8595a8" stroke-dasharray="3 3" stroke-dashoffset="0"/><line x1="931.5" y1="1" x2="931.5" y2="493" stroke="#8595a8" stroke-dasharray="3 3" stroke-dashoffset="0"/><line x1="963.5" y1="1" x2="963.5" y2="493" stroke="#8595a8" stroke-dasharray="3 3" stroke-dashoffset="0"/><line x1="995.5" y1="1" x2="995.5" y2="493" stroke="#8595a8" stroke-dasharray="3 3" stroke-dashoffset="0"/><line x1="1027.5" y1="1" x2="1027.5" y2="493" stroke="#8595a8" stroke-dasharray="3 3" stroke-dashoffset="0"/><line x1="1059.5" y1="1" x2="1059.5" y2="493" stroke="#8595a8" stroke-dasharray="3 3" stroke-dashoffset="0"/><line x1="1091.5" y1="1" x2="1091.5" y2="493" stroke="#8595a8" stroke-dasharray="3 3" stroke-dashoffset="0"/><line x1="1123.5" y1="1" x2="1123.5" y2="493" stroke="#8595a8" stroke-dasharray="3 3" stroke-dashoffset="0"/><line x1="1155.5" y1="1" x2="1155.5" y2="493" stroke="#8595a8" stroke-dasharray="3 3" stroke-dashoffset="0"/><rect x="3" y="193" width="1165" height="1" fill="#778899"/><rect x="19" y="208" width="1" height="31" fill="#00ff00"/><rect x="17" y="216" width="5" height="18" fill="#00ff00"/><rect x="18" y="217" width="3" height="16" fill="#fff"/><rect x="27" y="223" width="1" height="42" fill="#00ff00"/><rect x="25" y="234" width="5" height="11" fill="#00ff00"/><rect x="26" y="235" width="3" height="9" fill="#fff"/><rect x="35" y="230" width="1" height="51" fill="#00ff00"/><rect x="33" y="243" width="5" height="30" fill="#00ff00"/><rect x="34" y="244" width="3" height="28" fill="#fff"/><rect x="43" y="245" width="1" height="30" fill="#00ff00"/><rect x="41" y="272" width="5" height="1" fill="#00ff00"/><rect x="51" y="250" width="1" height="28" fill="#00ff00"/><rect x="49" y="268" width="5" height="4" fill="#00ff00"/><rect x="50" y="269" width="3" height="2" fill="#000"/><rect x="59" y="224" width="1" height="79" fill="#00ff00"/><rect x="57" y="230" width="5" height="39" fill="#00ff00"/><rect x="58" y="231" width="3" height="37" fill="#000"/><rect x="67" y="223" width="1" height="33" fill="#00ff00"/><rect x="65" y="229" width="5" height="10" fill="#00ff00"/><rect x="66" y="230" width="3" height="8" fill="#fff"/><rect x="75" y="208" width="1" height="54" fill="#00ff00"/><rect x="73" y="216" width="5" height="32" fill="#00ff00"/><rect x="74" y="217" width="3" height="30" fill="#000"/><rect x="83" y="210" width="1" height="12" fill="#00ff00"/><rect x="81" y="216" width="5" height="1" fill="#00ff00"/><rect x="91" y="213" width="1" height="27" fill="#00ff00"/><rect x="89" y="218" width="5" height="4" fill="#00ff00"/><rect x="90" y="219" width="3" height="2" fill="#fff"/><rect x="99" y="216" width="1" height="17" fill="#00ff00"/><rect x="97" y="222" width="5" height="1" fill="#00ff00"/><rect x="107" y="218" width="1" height="21" fill="#00ff00"/><rect x="105" y="222" width="5" height="6" fill="#00ff00"/><rect x="106" y="223" width="3" height="4" fill="#fff"/><rect x="115" y="214" width="1" height="17" fill="#00ff00"/><rect x="113" y="217" width="5" height="11" fill="#00ff00"/><rect x="114" y="218" width="3" height="9" fill="#000"/><rect x="123" y="214" width="1" height="17" fill="#00ff00"/><rect x="121" y="218" width="5" height="5" fill="#00ff00"/><rect x="122" y="219" width="3" height="3" fill="#fff"/><rect x="131" y="214" width="1" height="25" fill="#00ff00"/><rect x="129" y="218" width="5" height="19" fill="#00ff00"/><rect x="130" y="219" width="3" height="17" fill="#000"/><rect x="139" y="214" width="1" height="24" fill="#00ff00"/><rect x="137" y="219" width="5" height="6" fill="#00ff00"/><rect x="138" y="220" width="3" height="4" fill="#fff"/><rect x="147" y="216" width="1" height="21" fill="#00ff00"/><rect x="145" y="225" width="5" height="10" fill="#00ff00"/><rect x="146" y="226" width="3" height="8" fill="#fff"/><rect x="155" y="233" width="1" height="44" fill="#00ff00"/><rect x="153" y="236" width="5" height="30" fill="#00ff00"/><rect x="154" y="237" width="3" height="28" fill="#fff"/><rect x="163" y="242" width="1" height="26" fill="#00ff00"/><rect x="161" y="260" width="5" height="5" fill="#00ff00"/><rect x="162" y="261" width="3" height="3" fill="#000"/><rect x="171" y="241" width="1" height="22" fill="#00ff00"/><rect x="169" y="252" width="5" height="9" fill="#00ff00"/><rect x="170" y="253" width="3" height="7" fill="#000"/><rect x="179" y="245" width="1" height="11" fill="#00ff00"/><rect x="177" y="253" width="5" height="1" fill="#00ff00"/><rect x="187" y="223" width="1" height="36" fill="#00ff00"/><rect x="185" y="229" width="5" height="25" fill="#00ff00"/><rect x="186" y="230" width="3" height="23" fill="#000"/><rect x="195" y="216" width="1" height="22" fill="#00ff00"/><rect x="193" y="226" width="5" height="4" fill="#00ff00"/><rect x="194" y="227" width="3" height="2" fill="#000"/><rect x="203" y="219" width="1" height="23" fill="#00ff00"/><rect x="201" y="227" width="5" height="1" fill="#00ff00"/><rect x="211" y="217" width="1" height="14" fill="#00ff00"/><rect x="209" y="219" width="5" height="10" fill="#00ff00"/><rect x="210" y="220" width="3" height="8" fill="#000"/><rect x="219" y="213" width="1" height="32" fill="#00ff00"/><rect x="217" y="218" width="5" height="15" fill="#00ff00"/><rect x="218" y="219" width="3" height="13" fill="#fff"/><rect x="227" y="218" width="1" height="22" fill="#00ff00"/><rect x="225" y="230" width="5" height="1" fill="#00ff00"/><rect x="235" y="220" width="1" height="25" fill="#00ff00"/><rect x="233" y="228" width="5" height="10" fill="#00ff00"/><rect x="234" y="229" width="3" height="8" fill="#fff"/><rect x="243" y="230" width="1" height="37" fill="#00ff00"/><rect x="241" y="237" width="5" height="30" fill="#00ff00"/><rect x="242" y="238" width="3" height="28" fill="#fff"/><rect x="251" y="260" width="1" height="35" fill="#00ff00"/><rect x="249" y="264" width="5" height="7" fill="#00ff00"/><rect x="250" y="265" width="3" height="5" fill="#fff"/><rect x="259" y="263" width="1" height="40" fill="#00ff00"/><rect x="257" y="271" width="5" height="4" fill="#00ff00"/><rect x="258" y="272" width="3" height="2" fill="#fff"/><rect x="267" y="244" width="1" height="36" fill="#00ff00"/><rect x="265" y="263" width="5" height="14" fill="#00ff00"/><rect x="266" y="264" width="3" height="12" fill="#000"/><rect x="275" y="236" width="1" height="40" fill="#00ff00"/><rect x="273" y="237" width="5" height="27" fill="#00ff00"/><rect x="274" y="238" width="3" height="25" fill="#000"/><rect x="283" y="218" width="1" height="22" fill="#00ff00"/><rect x="281" y="223" width="5" height="16" fill="#00ff00"/><rect x="282" y="224" width="3" height="14" fill="#000"/><rect x="291" y="222" width="1" height="21" fill="#00ff00"/><rect x="289" y="223" width="5" height="12" fill="#00ff00"/><rect x="290" y="224" width="3" height="10" fill="#fff"/><rect x="299" y="217" width="1" height="23" fill="#00ff00"/><rect x="297" y="219" width="5" height="16" fill="#00ff00"/><rect x="298" y="220" width="3" height="14" fill="#000"/><rect x="307" y="218" width="1" height="15" fill="#00ff00"/><rect x="305" y="219" width="5" height="12" fill="#00ff00"/><rect x="306" y="220" width="3" height="10" fill="#fff"/><rect x="315" y="223" width="1" height="10" fill="#00ff00"/><rect x="313" y="230" width="5" height="1" fill="#00ff00"/><rect x="323" y="230" width="1" height="5" fill="#00ff00"/><rect x="321" y="231" width="5" height="4" fill="#00ff00"/><rect x="322" y="232" width="3" height="2" fill="#fff"/><rect x="331" y="224" width="1" height="22" fill="#00ff00"/><rect x="329" y="233" width="5" height="1" fill="#00ff00"/><rect x="339" y="224" width="1" height="13" fill="#00ff00"/><rect x="337" y="230" width="5" height="3" fill="#00ff00"/><rect x="338" y="231" width="3" height="1" fill="#000"/><rect x="347" y="217" width="1" height="24" fill="#00ff00"/><rect x="345" y="227" width="5" height="4" fill="#00ff00"/><rect x="346" y="228" width="3" height="2" fill="#000"/><rect x="355" y="222" width="1" height="18" fill="#00ff00"/><rect x="353" y="227" width="5" height="6" fill="#00ff00"/><rect x="354" y="228" width="3" height="4" fill="#fff"/><rect x="363" y="229" width="1" height="10" fill="#00ff00"/><rect x="361" y="234" width="5" height="1" fill="#00ff00"/><rect x="371" y="228" width="1" height="9" fill="#00ff00"/><rect x="369" y="228" width="5" height="7" fill="#00ff00"/><rect x="370" y="229" width="3" height="5" fill="#000"/><rect x="379" y="224" width="1" height="11" fill="#00ff00"/><rect x="377" y="226" width="5" height="3" fill="#00ff00"/><rect x="378" y="227" width="3" height="1" fill="#000"/><rect x="387" y="224" width="1" height="8" fill="#00ff00"/><rect x="385" y="227" width="5" height="1" fill="#00ff00"/><rect x="395" y="220" width="1" height="12" fill="#00ff00"/><rect x="393" y="228" width="5" height="1" fill="#00ff00"/><rect x="403" y="221" width="1" height="19" fill="#00ff00"/><rect x="401" y="229" width="5" height="7" fill="#00ff00"/><rect x="402" y="230" width="3" height="5" fill="#fff"/><rect x="411" y="234" width="1" height="22" fill="#00ff00"/><rect x="409" y="234" width="5" height="9" fill="#00ff00"/><rect x="410" y="235" width="3" height="7" fill="#fff"/><rect x="419" y="235" width="1" height="18" fill="#00ff00"/><rect x="417" y="242" width="5" height="8" fill="#00ff00"/><rect x="418" y="243" width="3" height="6" fill="#fff"/><rect x="427" y="245" width="1" height="14" fill="#00ff00"/><rect x="425" y="248" width="5" height="9" fill="#00ff00"/><rect x="426" y="249" width="3" height="7" fill="#fff"/><rect x="435" y="247" width="1" height="24" fill="#00ff00"/><rect x="433" y="256" width="5" height="5" fill="#00ff00"/><rect x="434" y="257" width="3" height="3" fill="#fff"/><rect x="443" y="243" width="1" height="45" fill="#00ff00"/><rect x="441" y="260" width="5" height="12" fill="#00ff00"/><rect x="442" y="261" width="3" height="10" fill="#fff"/><rect x="451" y="231" width="1" height="56" fill="#00ff00"/><rect x="449" y="241" width="5" height="31" fill="#00ff00"/><rect x="450" y="242" width="3" height="29" fill="#000"/><rect x="459" y="229" width="1" height="30" fill="#00ff00"/><rect x="457" y="242" width="5" height="10" fill="#00ff00"/><rect x="458" y="243" width="3" height="8" fill="#fff"/><rect x="467" y="250" width="1" height="21" fill="#00ff00"/><rect x="465" y="251" width="5" height="5" fill="#00ff00"/><rect x="466" y="252" width="3" height="3" fill="#fff"/><rect x="475" y="241" width="1" height="16" fill="#00ff00"/><rect x="473" y="250" width="5" height="7" fill="#00ff00"/><rect x="474" y="251" width="3" height="5" fill="#000"/><rect x="483" y="229" width="1" height="29" fill="#00ff00"/><rect x="481" y="250" width="5" height="1" fill="#00ff00"/><rect x="491" y="187" width="1" height="296" fill="#00ff00"/><rect x="489" y="252" width="5" height="203" fill="#00ff00"/><rect x="490" y="253" width="3" height="201" fill="#fff"/><rect x="499" y="367" width="1" height="108" fill="#00ff00"/><rect x="497" y="396" width="5" height="59" fill="#00ff00"/><rect x="498" y="397" width="3" height="57" fill="#000"/><rect x="507" y="387" width="1" height="21" fill="#00ff00"/><rect x="505" y="396" width="5" height="11" fill="#00ff00"/><rect x="506" y="397" width="3" height="9" fill="#fff"/><rect x="515" y="391" width="1" height="22" fill="#00ff00"/><rect x="513" y="393" width="5" height="19" fill="#00ff00"/><rect x="514" y="394" width="3" height="17" fill="#000"/><rect x="523" y="326" width="1" height="75" fill="#00ff00"/><rect x="521" y="330" width="5" height="64" fill="#00ff00"/><rect x="522" y="331" width="3" height="62" fill="#000"/><rect x="531" y="327" width="1" height="70" fill="#00ff00"/><rect x="529" y="330" width="5" height="49" fill="#00ff00"/><rect x="530" y="331" width="3" height="47" fill="#fff"/><rect x="539" y="366" width="1" height="44" fill="#00ff00"/><rect x="537" y="378" width="5" height="24" fill="#00ff00"/><rect x="538" y="379" width="3" height="22" fill="#fff"/><rect x="547" y="386" width="1" height="74" fill="#00ff00"/><rect x="545" y="400" width="5" height="34" fill="#00ff00"/><rect x="546" y="401" width="3" height="32" fill="#fff"/><rect x="555" y="405" width="1" height="34" fill="#00ff00"/><rect x="553" y="405" width="5" height="28" fill="#00ff00"/><rect x="554" y="406" width="3" height="26" fill="#000"/><rect x="563" y="385" width="1" height="21" fill="#00ff00"/><rect x="561" y="401" width="5" height="5" fill="#00ff00"/><rect x="562" y="402" width="3" height="3" fill="#000"/><rect x="571" y="369" width="1" height="33" fill="#00ff00"/><rect x="569" y="375" width="5" height="27" fill="#00ff00"/><rect x="570" y="376" width="3" height="25" fill="#000"/><rect x="579" y="347" width="1" height="33" fill="#00ff00"/><rect x="577" y="359" width="5" height="16" fill="#00ff00"/><rect x="578" y="360" width="3" height="14" fill="#000"/><rect x="587" y="310" width="1" height="64" fill="#00ff00"/><rect x="585" y="315" width="5" height="45" fill="#00ff00"/><rect x="586" y="316" width="3" height="43" fill="#000"/><rect x="595" y="290" width="1" height="52" fill="#00ff00"/><rect x="593" y="303" width="5" height="14" fill="#00ff00"/><rect x="594" y="304" width="3" height="12" fill="#000"/><rect x="603" y="280" width="1" height="31" fill="#00ff00"/><rect x="601" y="302" width="5" height="1" fill="#00ff00"/><rect x="611" y="289" width="1" height="29" fill="#00ff00"/><rect x="609" y="302" width="5" height="3" fill="#00ff00"/><rect x="610" y="303" width="3" height="1" fill="#fff"/><rect x="619" y="291" width="1" height="38" fill="#00ff00"/><rect x="617" y="298" width="5" height="7" fill="#00ff00"/><rect x="618" y="299" width="3" height="5" fill="#000"/><rect x="627" y="250" width="1" height="56" fill="#00ff00"/><rect x="625" y="252" width="5" height="47" fill="#00ff00"/><rect x="626" y="253" width="3" height="45" fill="#000"/><rect x="635" y="252" width="1" height="47" fill="#00ff00"/><rect x="633" y="252" width="5" height="15" fill="#00ff00"/><rect x="634" y="253" width="3" height="13" fill="#fff"/><rect x="643" y="195" width="1" height="80" fill="#00ff00"/><rect x="641" y="211" width="5" height="56" fill="#00ff00"/><rect x="642" y="212" width="3" height="54" fill="#000"/><rect x="651" y="202" width="1" height="33" fill="#00ff00"/><rect x="649" y="211" width="5" height="1" fill="#00ff00"/><rect x="659" y="177" width="1" height="41" fill="#00ff00"/><rect x="657" y="184" width="5" height="28" fill="#00ff00"/><rect x="658" y="185" width="3" height="26" fill="#000"/><rect x="667" y="158" width="1" height="36" fill="#00ff00"/><rect x="665" y="182" width="5" height="1" fill="#00ff00"/><rect x="675" y="158" width="1" height="39" fill="#00ff00"/><rect x="673" y="166" width="5" height="16" fill="#00ff00"/><rect x="674" y="167" width="3" height="14" fill="#000"/><rect x="683" y="164" width="1" height="28" fill="#00ff00"/><rect x="681" y="166" width="5" height="20" fill="#00ff00"/><rect x="682" y="167" width="3" height="18" fill="#fff"/><rect x="691" y="185" width="1" height="70" fill="#00ff00"/><rect x="689" y="186" width="5" height="62" fill="#00ff00"/><rect x="690" y="187" width="3" height="60" fill="#fff"/><rect x="699" y="215" width="1" height="35" fill="#00ff00"/><rect x="697" y="227" width="5" height="21" fill="#00ff00"/><rect x="698" y="228" width="3" height="19" fill="#000"/><rect x="707" y="217" width="1" height="7" fill="#00ff00"/><rect x="705" y="220" width="5" height="1" fill="#00ff00"/><rect x="715" y="203" width="1" height="32" fill="#00ff00"/><rect x="713" y="221" width="5" height="13" fill="#00ff00"/><rect x="714" y="222" width="3" height="11" fill="#fff"/><rect x="723" y="192" width="1" height="45" fill="#00ff00"/><rect x="721" y="198" width="5" height="36" fill="#00ff00"/><rect x="722" y="199" width="3" height="34" fill="#000"/><rect x="731" y="161" width="1" height="56" fill="#00ff00"/><rect x="729" y="171" width="5" height="27" fill="#00ff00"/><rect x="730" y="172" width="3" height="25" fill="#000"/><rect x="739" y="119" width="1" height="73" fill="#00ff00"/><rect x="737" y="124" width="5" height="48" fill="#00ff00"/><rect x="738" y="125" width="3" height="46" fill="#000"/><rect x="747" y="116" width="1" height="44" fill="#00ff00"/><rect x="745" y="124" width="5" height="22" fill="#00ff00"/><rect x="746" y="125" width="3" height="20" fill="#fff"/><rect x="755" y="145" width="1" height="38" fill="#00ff00"/><rect x="753" y="146" width="5" height="4" fill="#00ff00"/><rect x="754" y="147" width="3" height="2" fill="#fff"/><rect x="763" y="142" width="1" height="27" fill="#00ff00"/><rect x="761" y="150" width="5" height="9" fill="#00ff00"/><rect x="762" y="151" width="3" height="7" fill="#fff"/><rect x="771" y="133" width="1" height="26" fill="#00ff00"/><rect x="769" y="136" width="5" height="23" fill="#00ff00"/><rect x="770" y="137" width="3" height="21" fill="#000"/><rect x="779" y="135" width="1" height="35" fill="#00ff00"/><rect x="777" y="136" width="5" height="12" fill="#00ff00"/><rect x="778" y="137" width="3" height="10" fill="#fff"/><rect x="787" y="146" width="1" height="51" fill="#00ff00"/><rect x="785" y="147" width="5" height="19" fill="#00ff00"/><rect x="786" y="148" width="3" height="17" fill="#fff"/><rect x="795" y="155" width="1" height="32" fill="#00ff00"/><rect x="793" y="163" width="5" height="17" fill="#00ff00"/><rect x="794" y="164" width="3" height="15" fill="#fff"/><rect x="803" y="161" width="1" height="26" fill="#00ff00"/><rect x="801" y="169" width="5" height="11" fill="#00ff00"/><rect x="802" y="170" width="3" height="9" fill="#000"/><rect x="811" y="169" width="1" height="43" fill="#00ff00"/><rect x="809" y="169" width="5" height="40" fill="#00ff00"/><rect x="810" y="170" width="3" height="38" fill="#fff"/><rect x="819" y="177" width="1" height="34" fill="#00ff00"/><rect x="817" y="180" width="5" height="29" fill="#00ff00"/><rect x="818" y="181" width="3" height="27" fill="#000"/><rect x="827" y="133" width="1" height="97" fill="#00ff00"/><rect x="825" y="142" width="5" height="39" fill="#00ff00"/><rect x="826" y="143" width="3" height="37" fill="#000"/><rect x="835" y="140" width="1" height="80" fill="#00ff00"/><rect x="833" y="142" width="5" height="54" fill="#00ff00"/><rect x="834" y="143" width="3" height="52" fill="#fff"/><rect x="843" y="162" width="1" height="47" fill="#00ff00"/><rect x="841" y="182" width="5" height="14" fill="#00ff00"/><rect x="842" y="183" width="3" height="12" fill="#000"/><rect x="851" y="179" width="1" height="38" fill="#00ff00"/><rect x="849" y="181" width="5" height="10" fill="#00ff00"/><rect x="850" y="182" width="3" height="8" fill="#fff"/><rect x="859" y="179" width="1" height="26" fill="#00ff00"/><rect x="857" y="179" width="5" height="12" fill="#00ff00"/><rect x="858" y="180" width="3" height="10" fill="#000"/><rect x="867" y="153" width="1" height="31" fill="#00ff00"/><rect x="865" y="154" width="5" height="26" fill="#00ff00"/><rect x="866" y="155" width="3" height="24" fill="#000"/><rect x="875" y="154" width="1" height="14" fill="#00ff00"/><rect x="873" y="154" width="5" height="1" fill="#00ff00"/><rect x="883" y="145" width="1" height="25" fill="#00ff00"/><rect x="881" y="154" width="5" height="7" fill="#00ff00"/><rect x="882" y="155" width="3" height="5" fill="#fff"/><rect x="891" y="151" width="1" height="17" fill="#00ff00"/><rect x="889" y="161" width="5" height="3" fill="#00ff00"/><rect x="890" y="162" width="3" height="1" fill="#fff"/><rect x="899" y="164" width="1" height="11" fill="#00ff00"/><rect x="897" y="170" width="5" height="4" fill="#00ff00"/><rect x="898" y="171" width="3" height="2" fill="#fff"/><rect x="907" y="120" width="1" height="48" fill="#00ff00"/><rect x="905" y="138" width="5" height="30" fill="#00ff00"/><rect x="906" y="139" width="3" height="28" fill="#000"/><rect x="915" y="120" width="1" height="26" fill="#00ff00"/><rect x="913" y="127" width="5" height="12" fill="#00ff00"/><rect x="914" y="128" width="3" height="10" fill="#000"/><rect x="923" y="91" width="1" height="42" fill="#00ff00"/><rect x="921" y="110" width="5" height="18" fill="#00ff00"/><rect x="922" y="111" width="3" height="16" fill="#000"/><rect x="931" y="104" width="1" height="36" fill="#00ff00"/><rect x="929" y="110" width="5" height="11" fill="#00ff00"/><rect x="930" y="111" width="3" height="9" fill="#fff"/><rect x="939" y="93" width="1" height="31" fill="#00ff00"/><rect x="937" y="106" width="5" height="15" fill="#00ff00"/><rect x="938" y="107" width="3" height="13" fill="#000"/><rect x="947" y="72" width="1" height="38" fill="#00ff00"/><rect x="945" y="90" width="5" height="17" fill="#00ff00"/><rect x="946" y="91" width="3" height="15" fill="#000"/><rect x="955" y="84" width="1" height="22" fill="#00ff00"/><rect x="953" y="84" width="5" height="7" fill="#00ff00"/><rect x="954" y="85" width="3" height="5" fill="#000"/><rect x="963" y="66" width="1" height="19" fill="#00ff00"/><rect x="961" y="82" width="5" height="3" fill="#00ff00"/><rect x="962" y="83" width="3" height="1" fill="#000"/><rect x="971" y="26" width="1" height="59" fill="#00ff00"/><rect x="969" y="39" width="5" height="44" fill="#00ff00"/><rect x="970" y="40" width="3" height="42" fill="#000"/><rect x="979" y="39" width="1" height="27" fill="#00ff00"/><rect x="977" y="39" width="5" height="12" fill="#00ff00"/><rect x="978" y="40" width="3" height="10" fill="#fff"/><rect x="987" y="48" width="1" height="32" fill="#00ff00"/><rect x="985" y="51" width="5" height="1" fill="#00ff00"/><rect x="995" y="43" width="1" height="30" fill="#00ff00"/><rect x="993" y="51" width="5" height="4" fill="#00ff00"/><rect x="994" y="52" width="3" height="2" fill="#fff"/><rect x="1003" y="50" width="1" height="26" fill="#00ff00"/><rect x="1001" y="53" width="5" height="14" fill="#00ff00"/><rect x="1002" y="54" width="3" height="12" fill="#fff"/><rect x="1011" y="57" width="1" height="30" fill="#00ff00"/><rect x="1009" y="66" width="5" height="16" fill="#00ff00"/><rect x="1010" y="67" width="3" height="14" fill="#fff"/><rect x="1019" y="80" width="1" height="92" fill="#00ff00"/><rect x="1017" y="81" width="5" height="50" fill="#00ff00"/><rect x="1018" y="82" width="3" height="48" fill="#fff"/><rect x="1027" y="102" width="1" height="53" fill="#00ff00"/><rect x="1025" y="113" width="5" height="18" fill="#00ff00"/><rect x="1026" y="114" width="3" height="16" fill="#000"/><rect x="1035" y="108" width="1" height="65" fill="#00ff00"/><rect x="1033" y="113" width="5" height="50" fill="#00ff00"/><rect x="1034" y="114" width="3" height="48" fill="#fff"/><rect x="1043" y="160" width="1" height="74" fill="#00ff00"/><rect x="1041" y="162" width="5" height="24" fill="#00ff00"/><rect x="1042" y="163" width="3" height="22" fill="#fff"/><rect x="1051" y="179" width="1" height="53" fill="#00ff00"/><rect x="1049" y="185" width="5" height="18" fill="#00ff00"/><rect x="1050" y="186" width="3" height="16" fill="#fff"/><rect x="1059" y="178" width="1" height="35" fill="#00ff00"/><rect x="1057" y="185" width="5" height="18" fill="#00ff00"/><rect x="1058" y="186" width="3" height="16" fill="#000"/><rect x="1067" y="183" width="1" height="22" fill="#00ff00"/><rect x="1065" y="185" width="5" height="16" fill="#00ff00"/><rect x="1066" y="186" width="3" height="14" fill="#fff"/><rect x="1075" y="194" width="1" height="29" fill="#00ff00"/><rect x="1073" y="198" width="5" height="18" fill="#00ff00"/><rect x="1074" y="199" width="3" height="16" fill="#fff"/><rect x="1083" y="194" width="1" height="24" fill="#00ff00"/><rect x="1081" y="202" width="5" height="15" fill="#00ff00"/><rect x="1082" y="203" width="3" height="13" fill="#000"/><rect x="1091" y="189" width="1" height="30" fill="#00ff00"/><rect x="1089" y="192" width="5" height="27" fill="#00ff00"/><rect x="1090" y="193" width="3" height="25" fill="#000"/><rect x="1099" y="154" width="1" height="39" fill="#00ff00"/><rect x="1097" y="173" width="5" height="20" fill="#00ff00"/><rect x="1098" y="174" width="3" height="18" fill="#000"/><rect x="1107" y="173" width="1" height="30" fill="#00ff00"/><rect x="1105" y="173" width="5" height="16" fill="#00ff00"/><rect x="1106" y="174" width="3" height="14" fill="#fff"/><rect x="1115" y="180" width="1" height="81" fill="#00ff00"/><rect x="1113" y="189" width="5" height="56" fill="#00ff00"/><rect x="1114" y="190" width="3" height="54" fill="#fff"/><rect x="1123" y="203" width="1" height="84" fill="#00ff00"/><rect x="1121" y="206" width="5" height="39" fill="#00ff00"/><rect x="1122" y="207" width="3" height="37" fill="#000"/><rect x="1131" y="172" width="1" height="37" fill="#00ff00"/><rect x="1129" y="185" width="5" height="22" fill="#00ff00"/><rect x="1130" y="186" width="3" height="20" fill="#000"/><rect x="1139" y="183" width="1" height="40" fill="#00ff00"/><rect x="1137" y="185" width="5" height="24" fill="#00ff00"/><rect x="1138" y="186" width="3" height="22" fill="#fff"/><rect x="1147" y="191" width="1" height="26" fill="#00ff00"/><rect x="1145" y="194" width="5" height="15" fill="#00ff00"/><rect x="1146" y="195" width="3" height="13" fill="#000"/><rect x="2.5" y="1.5" width="1166" height="492" fill="none" stroke="#fff"/><rect x="1169" y="28" width="3" height="1" fill="#fff"/><rect x="1169" y="61" width="3" height="1" fill="#fff"/><rect x="1169" y="94" width="3" height="1" fill="#fff"/><rect x="1169" y="127" width="3" height="1" fill="#fff"/><rect x="1169" y="160" width="3" height="1" fill="#fff"/><rect x="1169" y="193" width="3" height="1" fill="#fff"/><rect x="1169" y="226" width="3" height="1" fill="#fff"/><rect x="1169" y="259" width="3" height="1" fill="#fff"/><rect x="1169" y="292" width="3" height="1" fill="#fff"/><rect x="1169" y="325" width="3" height="1" fill="#fff"/><rect x="1169" y="358" width="3" height="1" fill="#fff"/><rect x="1169" y="391" width="3" height="1" fill="#fff"/><rect x="1169" y="424" width="3" height="1" fill="#fff"/><rect x="1169" y="457" width="3" height="1" fill="#fff"/><rect x="1169" y="490" width="3" height="1" fill="#fff"/><rect x="3" y="494" width="1" height="3" fill="#fff"/><rect x="67" y="494" width="1" height="3" fill="#fff"/><rect x="131" y="494" width="1" height="3" fill="#fff"/><rect x="195" y="494" width="1" height="3" fill="#fff"/><rect x="259" y="494" width="1" height="3" fill="#fff"/><rect x="323" y="494" width="1" height="3" fill="#fff"/><rect x="387" y="494" width="1" height="3" fill="#fff"/><rect x="451" y="494" width="1" height="3" fill="#fff"/><rect x="515" y="494" width="1" height="3" fill="#fff"/><rect x="579" y="494" width="1" height="3" fill="#fff"/><rect x="643" y="494" width="1" height="3" fill="#fff"/><rect x="707" y="494" width="1" height="3" fill="#fff"/><rect x="771" y="494" width="1" height="3" fill="#fff"/><rect x="835" y="494" width="1" height="3" fill="#fff"/><rect x="899" y="494" width="1" height="3" fill="#fff"/><rect x="963" y="494" width="1" height="3" fill="#fff"/><rect x="1027" y="494" width="1" height="3" fill="#fff"/><rect x="1091" y="494" width="1" height="3" fill="#fff"/></svg>
<div class="t" style="top:163.0px;font-size:11px;line-height:15px;color:#fff;left:1396.5px;transform-origin:0 0;transform:scaleX(0.817);">131.325</div>
<div class="t" style="top:196.0px;font-size:11px;line-height:15px;color:#fff;left:1396.5px;transform-origin:0 0;transform:scaleX(0.817);">131.130</div>
<div class="t" style="top:229.0px;font-size:11px;line-height:15px;color:#fff;left:1396.5px;transform-origin:0 0;transform:scaleX(0.817);">130.930</div>
<div class="t" style="top:262.0px;font-size:11px;line-height:15px;color:#fff;left:1396.5px;transform-origin:0 0;transform:scaleX(0.817);">130.735</div>
<div class="t" style="top:295.0px;font-size:11px;line-height:15px;color:#fff;left:1396.5px;transform-origin:0 0;transform:scaleX(0.817);">130.535</div>
<div style="left:1392px;top:330px;width:41px;height:11px;background:#fff;"></div>
<div class="t" style="top:328.0px;font-size:11px;line-height:15px;color:#000;left:1396.5px;transform-origin:0 0;transform:scaleX(0.817);">130.334</div>
<div class="t" style="top:361.0px;font-size:11px;line-height:15px;color:#fff;left:1396.5px;transform-origin:0 0;transform:scaleX(0.817);">130.140</div>
<div class="t" style="top:394.0px;font-size:11px;line-height:15px;color:#fff;left:1396.5px;transform-origin:0 0;transform:scaleX(0.817);">129.940</div>
<div class="t" style="top:427.0px;font-size:11px;line-height:15px;color:#fff;left:1396.5px;transform-origin:0 0;transform:scaleX(0.817);">129.745</div>
<div class="t" style="top:460.0px;font-size:11px;line-height:15px;color:#fff;left:1396.5px;transform-origin:0 0;transform:scaleX(0.817);">129.545</div>
<div class="t" style="top:493.0px;font-size:11px;line-height:15px;color:#fff;left:1396.5px;transform-origin:0 0;transform:scaleX(0.817);">129.345</div>
<div class="t" style="top:526.0px;font-size:11px;line-height:15px;color:#fff;left:1396.5px;transform-origin:0 0;transform:scaleX(0.817);">129.150</div>
<div class="t" style="top:559.0px;font-size:11px;line-height:15px;color:#fff;left:1396.5px;transform-origin:0 0;transform:scaleX(0.817);">128.950</div>
<div class="t" style="top:592.0px;font-size:11px;line-height:15px;color:#fff;left:1396.5px;transform-origin:0 0;transform:scaleX(0.817);">128.755</div>
<div class="t" style="top:625.0px;font-size:11px;line-height:15px;color:#fff;left:1396.5px;transform-origin:0 0;transform:scaleX(0.817);">128.555</div>
<div class="t" style="top:637.5px;font-size:11px;line-height:15px;color:#fff;left:224px;transform-origin:0 0;transform:scaleX(0.844);">2 May 2022</div>
<div class="t" style="top:637.5px;font-size:11px;line-height:15px;color:#fff;left:288px;transform-origin:0 0;transform:scaleX(0.881);">2 May 16:00</div>
<div class="t" style="top:637.5px;font-size:11px;line-height:15px;color:#fff;left:352px;transform-origin:0 0;transform:scaleX(0.881);">3 May 00:00</div>
<div class="t" style="top:637.5px;font-size:11px;line-height:15px;color:#fff;left:416px;transform-origin:0 0;transform:scaleX(0.881);">3 May 08:00</div>
<div class="t" style="top:637.5px;font-size:11px;line-height:15px;color:#fff;left:480px;transform-origin:0 0;transform:scaleX(0.881);">3 May 16:00</div>
<div class="t" style="top:637.5px;font-size:11px;line-height:15px;color:#fff;left:544px;transform-origin:0 0;transform:scaleX(0.881);">4 May 00:00</div>
<div class="t" style="top:637.5px;font-size:11px;line-height:15px;color:#fff;left:608px;transform-origin:0 0;transform:scaleX(0.881);">4 May 08:00</div>
<div class="t" style="top:637.5px;font-size:11px;line-height:15px;color:#fff;left:672px;transform-origin:0 0;transform:scaleX(0.881);">4 May 16:00</div>
<div class="t" style="top:637.5px;font-size:11px;line-height:15px;color:#fff;left:736px;transform-origin:0 0;transform:scaleX(0.881);">5 May 00:00</div>
<div class="t" style="top:637.5px;font-size:11px;line-height:15px;color:#fff;left:800px;transform-origin:0 0;transform:scaleX(0.881);">5 May 08:00</div>
<div class="t" style="top:637.5px;font-size:11px;line-height:15px;color:#fff;left:864px;transform-origin:0 0;transform:scaleX(0.881);">5 May 16:00</div>
<div class="t" style="top:637.5px;font-size:11px;line-height:15px;color:#fff;left:928px;transform-origin:0 0;transform:scaleX(0.881);">6 May 00:00</div>
<div class="t" style="top:637.5px;font-size:11px;line-height:15px;color:#fff;left:992px;transform-origin:0 0;transform:scaleX(0.881);">6 May 08:00</div>
<div class="t" style="top:637.5px;font-size:11px;line-height:15px;color:#fff;left:1056px;transform-origin:0 0;transform:scaleX(0.881);">6 May 16:00</div>
<div class="t" style="top:637.5px;font-size:11px;line-height:15px;color:#fff;left:1120px;transform-origin:0 0;transform:scaleX(0.881);">9 May 00:00</div>
<div class="t" style="top:637.5px;font-size:11px;line-height:15px;color:#fff;left:1184px;transform-origin:0 0;transform:scaleX(0.881);">9 May 08:00</div>
<div class="t" style="top:637.5px;font-size:11px;line-height:15px;color:#fff;left:1248px;transform-origin:0 0;transform:scaleX(0.881);">9 May 16:00</div>
<div class="t" style="top:637.5px;font-size:11px;line-height:15px;color:#fff;left:1312px;transform-origin:0 0;transform:scaleX(0.873);">10 May 00:00</div>
<div style="left:212px;top:667px;width:1233px;height:563px;background:#d6e2ef;border:1px solid #5e5e5e;border-radius:6px 6px 0 0;"></div>
<div style="left:213px;top:668px;width:1231px;height:31px;background:linear-gradient(#b9c9da,#d3dfec);border-radius:5px 5px 0 0;"></div>
<div style="left:1335px;top:677px;width:32px;height:17px;border:1px solid #8f9fb8;border-radius:3px;background:linear-gradient(#d3dde8,#c2cfdd);"></div>
<div style="left:1345px;top:685px;width:11px;height:5px;background:#f4f4f4;border:1px solid #555;border-radius:2px;"></div>
<div style="left:1369px;top:677px;width:32px;height:17px;border:1px solid #8f9fb8;border-radius:3px;background:linear-gradient(#d3dde8,#c2cfdd);"></div>
<div style="left:1379px;top:680px;width:11px;height:9px;background:#f4f4f4;border:2px solid #555;border-radius:1px;"></div><div style="left:1382px;top:683px;width:5px;height:3px;border:1px solid #555;"></div>
<div style="left:1403px;top:677px;width:32px;height:17px;border:1px solid #8f9fb8;border-radius:3px;background:linear-gradient(#d3dde8,#c2cfdd);"></div>
<svg style="left:1412px;top:680px" width="13" height="11"><path d="M2 1.5L11 9.5M11 1.5L2 9.5" stroke="#555" stroke-width="4" stroke-linecap="round"/><path d="M2 1.5L11 9.5M11 1.5L2 9.5" stroke="#f2f2f2" stroke-width="2" stroke-linecap="round"/></svg>
<svg style="left:222px;top:678px" width="16" height="15"><rect x="0.5" y="0.5" width="10" height="8" fill="#eaf3fb" stroke="#4a86e8" stroke-dasharray="1.5 0.8"/><rect x="4.5" y="5.5" width="11" height="9" fill="#fff" stroke="#4a86e8" stroke-dasharray="1.5 0.8"/><path d="M6 11l2-2 2 3 2-3 2 2" stroke="#4a86e8" fill="none"/></svg>
<div class="t" style="top:677.0px;font-size:12px;line-height:16px;color:#9a8f8f;left:242px;transform-origin:0 0;transform:scaleX(0.935);">USDCHF,H4</div>
<div style="left:220px;top:697px;width:1215px;height:520px;background:#000;border-left:2px solid #555;border-top:2px solid #555;border-right:1px solid #fff;"></div>
<svg style="left:222px;top:699px" width="1213" height="504" shape-rendering="crispEdges"><line x1="4" y1="29.5" x2="1168" y2="29.5" stroke="#8595a8" stroke-dasharray="3 3" stroke-dashoffset="0"/><line x1="4" y1="62.5" x2="1168" y2="62.5" stroke="#8595a8" stroke-dasharray="3 3" stroke-dashoffset="0"/><line x1="4" y1="95.5" x2="1168" y2="95.5" stroke="#8595a8" stroke-dasharray="3 3" stroke-dashoffset="0"/><line x1="4" y1="128.5" x2="1168" y2="128.5" stroke="#8595a8" stroke-dasharray="3 3" stroke-dashoffset="0"/><line x1="4" y1="161.5" x2="1168" y2="161.5" stroke="#8595a8" stroke-dasharray="3 3" stroke-dashoffset="0"/><line x1="4" y1="194.5" x2="1168" y2="194.5" stroke="#8595a8" stroke-dasharray="3 3" stroke-dashoffset="0"/><line x1="4" y1="227.5" x2="1168" y2="227.5" stroke="#8595a8" stroke-dasharray="3 3" stroke-dashoffset="0"/><line x1="4" y1="260.5" x2="1168" y2="260.5" stroke="#8595a8" stroke-dasharray="3 3" stroke-dashoffset="0"/><line x1="4" y1="293.5" x2="1168" y2="293.5" stroke="#8595a8" stroke-dasharray="3 3" stroke-dashoffset="0"/><line x1="4" y1="326.5" x2="1168" y2="326.5" stroke="#8595a8" stroke-dasharray="3 3" stroke-dashoffset="0"/><line x1="35.5" y1="4" x2="35.5" y2="329" stroke="#8595a8" stroke-dasharray="3 3" stroke-dashoffset="2"/><line x1="67.5" y1="4" x2="67.5" y2="329" stroke="#8595a8" stroke-dasharray="3 3" stroke-dashoffset="2"/><line x1="99.5" y1="4" x2="99.5" y2="329" stroke="#8595a8" stroke-dasharray="3 3" stroke-dashoffset="2"/><line x1="131.5" y1="4" x2="131.5" y2="329" stroke="#8595a8" stroke-dasharray="3 3" stroke-dashoffset="2"/><line x1="163.5" y1="4" x2="163.5" y2="329" stroke="#8595a8" stroke-dasharray="3 3" stroke-dashoffset="2"/><line x1="195.5" y1="4" x2="195.5" y2="329" stroke="#8595a8" stroke-dasharray="3 3" stroke-dashoffset="2"/><line x1="227.5" y1="4" x2="227.5" y2="329" stroke="#8595a8" stroke-dasharray="3 3" stroke-dashoffset="2"/><line x1="259.5" y1="4" x2="259.5" y2="329" stroke="#8595a8" stroke-dasharray="3 3" stroke-dashoffset="2"/><line x1="291.5" y1="4" x2="291.5" y2="329" stroke="#8595a8" stroke-dasharray="3 3" stroke-dashoffset="2"/><line x1="323.5" y1="4" x2="323.5" y2="329" stroke="#8595a8" stroke-dasharray="3 3" stroke-dashoffset="2"/><line x1="355.5" y1="4" x2="355.5" y2="329" stroke="#8595a8" stroke-dasharray="3 3" stroke-dashoffset="2"/><line x1="387.5" y1="4" x2="387.5" y2="329" stroke="#8595a8" stroke-dasharray="3 3" stroke-dashoffset="2"/><line x1="419.5" y1="4" x2="419.5" y2="329" stroke="#8595a8" stroke-dasharray="3 3" stroke-dashoffset="2"/><line x1="451.5" y1="4" x2="451.5" y2="329" stroke="#8595a8" stroke-dasharray="3 3" stroke-dashoffset="2"/><line x1="483.5" y1="4" x2="483.5" y2="329" stroke="#8595a8" stroke-dasharray="3 3" stroke-dashoffset="2"/><line x1="515.5" y1="4" x2="515.5" y2="329" stroke="#8595a8" stroke-dasharray="3 3" stroke-dashoffset="2"/><line x1="547.5" y1="4" x2="547.5" y2="329" stroke="#8595a8" stroke-dasharray="3 3" stroke-dashoffset="2"/><line x1="579.5" y1="4" x2="579.5" y2="329" stroke="#8595a8" stroke-dasharray="3 3" stroke-dashoffset="2"/><line x1="611.5" y1="4" x2="611.5" y2="329" stroke="#8595a8" stroke-dasharray="3 3" stroke-dashoffset="2"/><line x1="643.5" y1="4" x2="643.5" y2="329" stroke="#8595a8" stroke-dasharray="3 3" stroke-dashoffset="2"/><line x1="675.5" y1="4" x2="675.5" y2="329" stroke="#8595a8" stroke-dasharray="3 3" stroke-dashoffset="2"/><line x1="707.5" y1="4" x2="707.5" y2="329" stroke="#8595a8" stroke-dasharray="3 3" stroke-dashoffset="2"/><line x1="739.5" y1="4" x2="739.5" y2="329" stroke="#8595a8" stroke-dasharray="3 3" stroke-dashoffset="2"/><line x1="771.5" y1="4" x2="771.5" y2="329" stroke="#8595a8" stroke-dasharray="3 3" stroke-dashoffset="2"/><line x1="803.5" y1="4" x2="803.5" y2="329" stroke="#8595a8" stroke-dasharray="3 3" stroke-dashoffset="2"/><line x1="835.5" y1="4" x2="835.5" y2="329" stroke="#8595a8" stroke-dasharray="3 3" stroke-dashoffset="2"/><line x1="867.5" y1="4" x2="867.5" y2="329" stroke="#8595a8" stroke-dasharray="3 3" stroke-dashoffset="2"/><line x1="899.5" y1="4" x2="899.5" y2="329" stroke="#8595a8" stroke-dasharray="3 3" stroke-dashoffset="2"/><line x1="931.5" y1="4" x2="931.5" y2="329" stroke="#8595a8" stroke-dasharray="3 3" stroke-dashoffset="2"/><line x1="963.5" y1="4" x2="963.5" y2="329" stroke="#8595a8" stroke-dasharray="3 3" stroke-dashoffset="2"/><line x1="995.5" y1="4" x2="995.5" y2="329" stroke="#8595a8" stroke-dasharray="3 3" stroke-dashoffset="2"/><line x1="1027.5" y1="4" x2="1027.5" y2="329" stroke="#8595a8" stroke-dasharray="3 3" stroke-dashoffset="2"/><line x1="1059.5" y1="4" x2="1059.5" y2="329" stroke="#8595a8" stroke-dasharray="3 3" stroke-dashoffset="2"/><line x1="1091.5" y1="4" x2="1091.5" y2="329" stroke="#8595a8" stroke-dasharray="3 3" stroke-dashoffset="2"/><line x1="1123.5" y1="4" x2="1123.5" y2="329" stroke="#8595a8" stroke-dasharray="3 3" stroke-dashoffset="2"/><line x1="1155.5" y1="4" x2="1155.5" y2="329" stroke="#8595a8" stroke-dasharray="3 3" stroke-dashoffset="2"/><line x1="4" y1="484.5" x2="1168" y2="484.5" stroke="#8595a8" stroke-dasharray="3 3" stroke-dashoffset="0"/><line x1="35.5" y1="332" x2="35.5" y2="493" stroke="#8595a8" stroke-dasharray="3 3" stroke-dashoffset="0"/><line x1="67.5" y1="332" x2="67.5" y2="493" stroke="#8595a8" stroke-dasharray="3 3" stroke-dashoffset="0"/><line x1="99.5" y1="332" x2="99.5" y2="493" stroke="#8595a8" stroke-dasharray="3 3" stroke-dashoffset="0"/><line x1="131.5" y1="332" x2="131.5" y2="493" stroke="#8595a8" stroke-dasharray="3 3" stroke-dashoffset="0"/><line x1="163.5" y1="332" x2="163.5" y2="493" stroke="#8595a8" stroke-dasharray="3 3" stroke-dashoffset="0"/><line x1="195.5" y1="332" x2="195.5" y2="493" stroke="#8595a8" stroke-dasharray="3 3" stroke-dashoffset="0"/><line x1="227.5" y1="332" x2="227.5" y2="493" stroke="#8595a8" stroke-dasharray="3 3" stroke-dashoffset="0"/><line x1="259.5" y1="332" x2="259.5" y2="493" stroke="#8595a8" stroke-dasharray="3 3" stroke-dashoffset="0"/><line x1="291.5" y1="332" x2="291.5" y2="493" stroke="#8595a8" stroke-dasharray="3 3" stroke-dashoffset="0"/><line x1="323.5" y1="332" x2="323.5" y2="493" stroke="#8595a8" stroke-dasharray="3 3" stroke-dashoffset="0"/><line x1="355.5" y1="332" x2="355.5" y2="493" stroke="#8595a8" stroke-dasharray="3 3" stroke-dashoffset="0"/><line x1="387.5" y1="332" x2="387.5" y2="493" stroke="#8595a8" stroke-dasharray="3 3" stroke-dashoffset="0"/><line x1="419.5" y1="332" x2="419.5" y2="493" stroke="#8595a8" stroke-dasharray="3 3" stroke-dashoffset="0"/><line x1="451.5" y1="332" x2="451.5" y2="493" stroke="#8595a8" stroke-dasharray="3 3" stroke-dashoffset="0"/><line x1="483.5" y1="332" x2="483.5" y2="493" stroke="#8595a8" stroke-dasharray="3 3" stroke-dashoffset="0"/><line x1="515.5" y1="332" x2="515.5" y2="493" stroke="#8595a8" stroke-dasharray="3 3" stroke-dashoffset="0"/><line x1="547.5" y1="332" x2="547.5" y2="493" stroke="#8595a8" stroke-dasharray="3 3" stroke-dashoffset="0"/><line x1="579.5" y1="332" x2="579.5" y2="493" stroke="#8595a8" stroke-dasharray="3 3" stroke-dashoffset="0"/><line x1="611.5" y1="332" x2="611.5" y2="493" stroke="#8595a8" stroke-dasharray="3 3" stroke-dashoffset="0"/><line x1="643.5" y1="332" x2="643.5" y2="493" stroke="#8595a8" stroke-dasharray="3 3" stroke-dashoffset="0"/><line x1="675.5" y1="332" x2="675.5" y2="493" stroke="#8595a8" stroke-dasharray="3 3" stroke-dashoffset="0"/><line x1="707.5" y1="332" x2="707.5" y2="493" stroke="#8595a8" stroke-dasharray="3 3" stroke-dashoffset="0"/><line x1="739.5" y1="332" x2="739.5" y2="493" stroke="#8595a8" stroke-dasharray="3 3" stroke-dashoffset="0"/><line x1="771.5" y1="332" x2="771.5" y2="493" stroke="#8595a8" stroke-dasharray="3 3" stroke-dashoffset="0"/><line x1="803.5" y1="332" x2="803.5" y2="493" stroke="#8595a8" stroke-dasharray="3 3" stroke-dashoffset="0"/><line x1="835.5" y1="332" x2="835.5" y2="493" stroke="#8595a8" stroke-dasharray="3 3" stroke-dashoffset="0"/><line x1="867.5" y1="332" x2="867.5" y2="493" stroke="#8595a8" stroke-dasharray="3 3" stroke-dashoffset="0"/><line x1="899.5" y1="332" x2="899.5" y2="493" stroke="#8595a8" stroke-dasharray="3 3" stroke-dashoffset="0"/><line x1="931.5" y1="332" x2="931.5" y2="493" stroke="#8595a8" stroke-dasharray="3 3" stroke-dashoffset="0"/><line x1="963.5" y1="332" x2="963.5" y2="493" stroke="#8595a8" stroke-dasharray="3 3" stroke-dashoffset="0"/><line x1="995.5" y1="332" x2="995.5" y2="493" stroke="#8595a8" stroke-dasharray="3 3" stroke-dashoffset="0"/><line x1="1027.5" y1="332" x2="1027.5" y2="493" stroke="#8595a8" stroke-dasharray="3 3" stroke-dashoffset="0"/><line x1="1059.5" y1="332" x2="1059.5" y2="493" stroke="#8595a8" stroke-dasharray="3 3" stroke-dashoffset="0"/><line x1="1091.5" y1="332" x2="1091.5" y2="493" stroke="#8595a8" stroke-dasharray="3 3" stroke-dashoffset="0"/><line x1="1123.5" y1="332" x2="1123.5" y2="493" stroke="#8595a8" stroke-dasharray="3 3" stroke-dashoffset="0"/><line x1="1155.5" y1="332" x2="1155.5" y2="493" stroke="#8595a8" stroke-dasharray="3 3" stroke-dashoffset="0"/><rect x="3" y="43" width="1165" height="1" fill="#778899"/><rect x="3" y="293" width="1" height="20" fill="#00ff00"/><rect x="1" y="304" width="5" height="8" fill="#00ff00"/><rect x="2" y="305" width="3" height="6" fill="#000"/><rect x="11" y="298" width="1" height="9" fill="#00ff00"/><rect x="9" y="301" width="5" height="5" fill="#00ff00"/><rect x="10" y="302" width="3" height="3" fill="#000"/><rect x="19" y="297" width="1" height="11" fill="#00ff00"/><rect x="17" y="302" width="5" height="2" fill="#00ff00"/><rect x="27" y="295" width="1" height="20" fill="#00ff00"/><rect x="25" y="300" width="5" height="5" fill="#00ff00"/><rect x="26" y="301" width="3" height="3" fill="#000"/><rect x="35" y="299" width="1" height="12" fill="#00ff00"/><rect x="33" y="303" width="5" height="3" fill="#00ff00"/><rect x="34" y="304" width="3" height="1" fill="#fff"/><rect x="43" y="303" width="1" height="6" fill="#00ff00"/><rect x="41" y="303" width="5" height="3" fill="#00ff00"/><rect x="42" y="304" width="3" height="1" fill="#000"/><rect x="51" y="300" width="1" height="9" fill="#00ff00"/><rect x="49" y="303" width="5" height="1" fill="#00ff00"/><rect x="59" y="294" width="1" height="11" fill="#00ff00"/><rect x="57" y="299" width="5" height="4" fill="#00ff00"/><rect x="58" y="300" width="3" height="2" fill="#000"/><rect x="67" y="295" width="1" height="13" fill="#00ff00"/><rect x="65" y="296" width="5" height="5" fill="#00ff00"/><rect x="66" y="297" width="3" height="3" fill="#000"/><rect x="75" y="295" width="1" height="9" fill="#00ff00"/><rect x="73" y="297" width="5" height="1" fill="#00ff00"/><rect x="83" y="294" width="1" height="9" fill="#00ff00"/><rect x="81" y="295" width="5" height="8" fill="#00ff00"/><rect x="82" y="296" width="3" height="6" fill="#000"/><rect x="91" y="291" width="1" height="8" fill="#00ff00"/><rect x="89" y="292" width="5" height="4" fill="#00ff00"/><rect x="90" y="293" width="3" height="2" fill="#000"/><rect x="99" y="291" width="1" height="8" fill="#00ff00"/><rect x="97" y="292" width="5" height="1" fill="#00ff00"/><rect x="107" y="287" width="1" height="10" fill="#00ff00"/><rect x="105" y="287" width="5" height="7" fill="#00ff00"/><rect x="106" y="288" width="3" height="5" fill="#000"/><rect x="115" y="282" width="1" height="23" fill="#00ff00"/><rect x="113" y="287" width="5" height="13" fill="#00ff00"/><rect x="114" y="288" width="3" height="11" fill="#fff"/><rect x="123" y="295" width="1" height="5" fill="#00ff00"/><rect x="121" y="298" width="5" height="2" fill="#00ff00"/><rect x="131" y="293" width="1" height="16" fill="#00ff00"/><rect x="129" y="293" width="5" height="16" fill="#00ff00"/><rect x="130" y="294" width="3" height="14" fill="#000"/><rect x="139" y="286" width="1" height="12" fill="#00ff00"/><rect x="137" y="290" width="5" height="4" fill="#00ff00"/><rect x="138" y="291" width="3" height="2" fill="#000"/><rect x="147" y="283" width="1" height="15" fill="#00ff00"/><rect x="145" y="290" width="5" height="6" fill="#00ff00"/><rect x="146" y="291" width="3" height="4" fill="#fff"/><rect x="155" y="294" width="1" height="10" fill="#00ff00"/><rect x="153" y="295" width="5" height="8" fill="#00ff00"/><rect x="154" y="296" width="3" height="6" fill="#fff"/><rect x="163" y="295" width="1" height="20" fill="#00ff00"/><rect x="161" y="301" width="5" height="11" fill="#00ff00"/><rect x="162" y="302" width="3" height="9" fill="#fff"/><rect x="171" y="307" width="1" height="7" fill="#00ff00"/><rect x="169" y="310" width="5" height="1" fill="#00ff00"/><rect x="179" y="305" width="1" height="9" fill="#00ff00"/><rect x="177" y="307" width="5" height="7" fill="#00ff00"/><rect x="178" y="308" width="3" height="5" fill="#000"/><rect x="187" y="305" width="1" height="8" fill="#00ff00"/><rect x="185" y="308" width="5" height="3" fill="#00ff00"/><rect x="186" y="309" width="3" height="1" fill="#fff"/><rect x="195" y="295" width="1" height="19" fill="#00ff00"/><rect x="193" y="301" width="5" height="11" fill="#00ff00"/><rect x="194" y="302" width="3" height="9" fill="#000"/><rect x="203" y="300" width="1" height="20" fill="#00ff00"/><rect x="201" y="301" width="5" height="19" fill="#00ff00"/><rect x="202" y="302" width="3" height="17" fill="#fff"/><rect x="211" y="306" width="1" height="17" fill="#00ff00"/><rect x="209" y="309" width="5" height="11" fill="#00ff00"/><rect x="210" y="310" width="3" height="9" fill="#000"/><rect x="219" y="302" width="1" height="10" fill="#00ff00"/><rect x="217" y="303" width="5" height="7" fill="#00ff00"/><rect x="218" y="304" width="3" height="5" fill="#000"/><rect x="227" y="297" width="1" height="11" fill="#00ff00"/><rect x="225" y="299" width="5" height="6" fill="#00ff00"/><rect x="226" y="300" width="3" height="4" fill="#000"/><rect x="235" y="298" width="1" height="8" fill="#00ff00"/><rect x="233" y="299" width="5" height="4" fill="#00ff00"/><rect x="234" y="300" width="3" height="2" fill="#fff"/><rect x="243" y="296" width="1" height="14" fill="#00ff00"/><rect x="241" y="303" width="5" height="6" fill="#00ff00"/><rect x="242" y="304" width="3" height="4" fill="#fff"/><rect x="251" y="290" width="1" height="20" fill="#00ff00"/><rect x="249" y="290" width="5" height="19" fill="#00ff00"/><rect x="250" y="291" width="3" height="17" fill="#000"/><rect x="259" y="290" width="1" height="16" fill="#00ff00"/><rect x="257" y="290" width="5" height="9" fill="#00ff00"/><rect x="258" y="291" width="3" height="7" fill="#fff"/><rect x="267" y="292" width="1" height="9" fill="#00ff00"/><rect x="265" y="294" width="5" height="5" fill="#00ff00"/><rect x="266" y="295" width="3" height="3" fill="#000"/><rect x="275" y="291" width="1" height="10" fill="#00ff00"/><rect x="273" y="293" width="5" height="6" fill="#00ff00"/><rect x="274" y="294" width="3" height="4" fill="#000"/><rect x="283" y="292" width="1" height="13" fill="#00ff00"/><rect x="281" y="294" width="5" height="10" fill="#00ff00"/><rect x="282" y="295" width="3" height="8" fill="#fff"/><rect x="291" y="291" width="1" height="15" fill="#00ff00"/><rect x="289" y="292" width="5" height="13" fill="#00ff00"/><rect x="290" y="293" width="3" height="11" fill="#000"/><rect x="299" y="280" width="1" height="18" fill="#00ff00"/><rect x="297" y="282" width="5" height="12" fill="#00ff00"/><rect x="298" y="283" width="3" height="10" fill="#000"/><rect x="307" y="257" width="1" height="27" fill="#00ff00"/><rect x="305" y="257" width="5" height="27" fill="#00ff00"/><rect x="306" y="258" width="3" height="25" fill="#000"/><rect x="315" y="257" width="1" height="6" fill="#00ff00"/><rect x="313" y="257" width="5" height="4" fill="#00ff00"/><rect x="314" y="258" width="3" height="2" fill="#fff"/><rect x="323" y="257" width="1" height="9" fill="#00ff00"/><rect x="321" y="259" width="5" height="4" fill="#00ff00"/><rect x="322" y="260" width="3" height="2" fill="#000"/><rect x="331" y="251" width="1" height="10" fill="#00ff00"/><rect x="329" y="257" width="5" height="3" fill="#00ff00"/><rect x="330" y="258" width="3" height="1" fill="#000"/><rect x="339" y="253" width="1" height="13" fill="#00ff00"/><rect x="337" y="257" width="5" height="5" fill="#00ff00"/><rect x="338" y="258" width="3" height="3" fill="#fff"/><rect x="347" y="260" width="1" height="5" fill="#00ff00"/><rect x="345" y="262" width="5" height="1" fill="#00ff00"/><rect x="355" y="257" width="1" height="8" fill="#00ff00"/><rect x="353" y="257" width="5" height="6" fill="#00ff00"/><rect x="354" y="258" width="3" height="4" fill="#000"/><rect x="363" y="254" width="1" height="9" fill="#00ff00"/><rect x="361" y="258" width="5" height="1" fill="#00ff00"/><rect x="371" y="253" width="1" height="12" fill="#00ff00"/><rect x="369" y="257" width="5" height="4" fill="#00ff00"/><rect x="370" y="258" width="3" height="2" fill="#000"/><rect x="379" y="250" width="1" height="12" fill="#00ff00"/><rect x="377" y="251" width="5" height="7" fill="#00ff00"/><rect x="378" y="252" width="3" height="5" fill="#000"/><rect x="387" y="249" width="1" height="9" fill="#00ff00"/><rect x="385" y="251" width="5" height="1" fill="#00ff00"/><rect x="395" y="250" width="1" height="13" fill="#00ff00"/><rect x="393" y="251" width="5" height="5" fill="#00ff00"/><rect x="394" y="252" width="3" height="3" fill="#fff"/><rect x="403" y="247" width="1" height="14" fill="#00ff00"/><rect x="401" y="250" width="5" height="6" fill="#00ff00"/><rect x="402" y="251" width="3" height="4" fill="#000"/><rect x="411" y="249" width="1" height="5" fill="#00ff00"/><rect x="409" y="251" width="5" height="1" fill="#00ff00"/><rect x="419" y="243" width="1" height="16" fill="#00ff00"/><rect x="417" y="246" width="5" height="12" fill="#00ff00"/><rect x="418" y="247" width="3" height="10" fill="#000"/><rect x="427" y="241" width="1" height="9" fill="#00ff00"/><rect x="425" y="244" width="5" height="4" fill="#00ff00"/><rect x="426" y="245" width="3" height="2" fill="#000"/><rect x="435" y="241" width="1" height="13" fill="#00ff00"/><rect x="433" y="244" width="5" height="1" fill="#00ff00"/><rect x="443" y="230" width="1" height="28" fill="#00ff00"/><rect x="441" y="244" width="5" height="7" fill="#00ff00"/><rect x="442" y="245" width="3" height="5" fill="#fff"/><rect x="451" y="227" width="1" height="25" fill="#00ff00"/><rect x="449" y="229" width="5" height="22" fill="#00ff00"/><rect x="450" y="230" width="3" height="20" fill="#000"/><rect x="459" y="216" width="1" height="18" fill="#00ff00"/><rect x="457" y="220" width="5" height="10" fill="#00ff00"/><rect x="458" y="221" width="3" height="8" fill="#000"/><rect x="467" y="212" width="1" height="10" fill="#00ff00"/><rect x="465" y="214" width="5" height="7" fill="#00ff00"/><rect x="466" y="215" width="3" height="5" fill="#000"/><rect x="475" y="210" width="1" height="15" fill="#00ff00"/><rect x="473" y="214" width="5" height="10" fill="#00ff00"/><rect x="474" y="215" width="3" height="8" fill="#fff"/><rect x="483" y="219" width="1" height="17" fill="#00ff00"/><rect x="481" y="223" width="5" height="13" fill="#00ff00"/><rect x="482" y="224" width="3" height="11" fill="#fff"/><rect x="491" y="231" width="1" height="17" fill="#00ff00"/><rect x="489" y="235" width="5" height="1" fill="#00ff00"/><rect x="499" y="229" width="1" height="17" fill="#00ff00"/><rect x="497" y="231" width="5" height="4" fill="#00ff00"/><rect x="498" y="232" width="3" height="2" fill="#000"/><rect x="507" y="230" width="1" height="9" fill="#00ff00"/><rect x="505" y="232" width="5" height="4" fill="#00ff00"/><rect x="506" y="233" width="3" height="2" fill="#fff"/><rect x="515" y="226" width="1" height="10" fill="#00ff00"/><rect x="513" y="227" width="5" height="9" fill="#00ff00"/><rect x="514" y="228" width="3" height="7" fill="#000"/><rect x="523" y="220" width="1" height="11" fill="#00ff00"/><rect x="521" y="223" width="5" height="5" fill="#00ff00"/><rect x="522" y="224" width="3" height="3" fill="#000"/><rect x="531" y="222" width="1" height="25" fill="#00ff00"/><rect x="529" y="223" width="5" height="11" fill="#00ff00"/><rect x="530" y="224" width="3" height="9" fill="#fff"/><rect x="539" y="227" width="1" height="13" fill="#00ff00"/><rect x="537" y="231" width="5" height="4" fill="#00ff00"/><rect x="538" y="232" width="3" height="2" fill="#000"/><rect x="547" y="202" width="1" height="32" fill="#00ff00"/><rect x="545" y="208" width="5" height="24" fill="#00ff00"/><rect x="546" y="209" width="3" height="22" fill="#000"/><rect x="555" y="208" width="1" height="10" fill="#00ff00"/><rect x="553" y="209" width="5" height="5" fill="#00ff00"/><rect x="554" y="210" width="3" height="3" fill="#fff"/><rect x="563" y="205" width="1" height="10" fill="#00ff00"/><rect x="561" y="207" width="5" height="8" fill="#00ff00"/><rect x="562" y="208" width="3" height="6" fill="#000"/><rect x="571" y="206" width="1" height="9" fill="#00ff00"/><rect x="569" y="207" width="5" height="5" fill="#00ff00"/><rect x="570" y="208" width="3" height="3" fill="#fff"/><rect x="579" y="200" width="1" height="15" fill="#00ff00"/><rect x="577" y="201" width="5" height="12" fill="#00ff00"/><rect x="578" y="202" width="3" height="10" fill="#000"/><rect x="587" y="199" width="1" height="10" fill="#00ff00"/><rect x="585" y="202" width="5" height="1" fill="#00ff00"/><rect x="595" y="185" width="1" height="24" fill="#00ff00"/><rect x="593" y="190" width="5" height="13" fill="#00ff00"/><rect x="594" y="191" width="3" height="11" fill="#000"/><rect x="603" y="190" width="1" height="11" fill="#00ff00"/><rect x="601" y="191" width="5" height="5" fill="#00ff00"/><rect x="602" y="192" width="3" height="3" fill="#fff"/><rect x="611" y="193" width="1" height="11" fill="#00ff00"/><rect x="609" y="198" width="5" height="1" fill="#00ff00"/><rect x="619" y="189" width="1" height="11" fill="#00ff00"/><rect x="617" y="192" width="5" height="7" fill="#00ff00"/><rect x="618" y="193" width="3" height="5" fill="#000"/><rect x="627" y="183" width="1" height="18" fill="#00ff00"/><rect x="625" y="187" width="5" height="4" fill="#00ff00"/><rect x="626" y="188" width="3" height="2" fill="#000"/><rect x="635" y="185" width="1" height="21" fill="#00ff00"/><rect x="633" y="187" width="5" height="18" fill="#00ff00"/><rect x="634" y="188" width="3" height="16" fill="#fff"/><rect x="643" y="187" width="1" height="18" fill="#00ff00"/><rect x="641" y="187" width="5" height="18" fill="#00ff00"/><rect x="642" y="188" width="3" height="16" fill="#000"/><rect x="651" y="183" width="1" height="8" fill="#00ff00"/><rect x="649" y="188" width="5" height="1" fill="#00ff00"/><rect x="659" y="185" width="1" height="12" fill="#00ff00"/><rect x="657" y="192" width="5" height="2" fill="#00ff00"/><rect x="667" y="186" width="1" height="11" fill="#00ff00"/><rect x="665" y="189" width="5" height="6" fill="#00ff00"/><rect x="666" y="190" width="3" height="4" fill="#000"/><rect x="675" y="180" width="1" height="12" fill="#00ff00"/><rect x="673" y="183" width="5" height="7" fill="#00ff00"/><rect x="674" y="184" width="3" height="5" fill="#000"/><rect x="683" y="182" width="1" height="16" fill="#00ff00"/><rect x="681" y="183" width="5" height="14" fill="#00ff00"/><rect x="682" y="184" width="3" height="12" fill="#fff"/><rect x="691" y="176" width="1" height="24" fill="#00ff00"/><rect x="689" y="177" width="5" height="19" fill="#00ff00"/><rect x="690" y="178" width="3" height="17" fill="#000"/><rect x="699" y="170" width="1" height="10" fill="#00ff00"/><rect x="697" y="171" width="5" height="8" fill="#00ff00"/><rect x="698" y="172" width="3" height="6" fill="#000"/><rect x="707" y="168" width="1" height="8" fill="#00ff00"/><rect x="705" y="171" width="5" height="1" fill="#00ff00"/><rect x="715" y="165" width="1" height="11" fill="#00ff00"/><rect x="713" y="170" width="5" height="1" fill="#00ff00"/><rect x="723" y="157" width="1" height="16" fill="#00ff00"/><rect x="721" y="158" width="5" height="14" fill="#00ff00"/><rect x="722" y="159" width="3" height="12" fill="#000"/><rect x="731" y="139" width="1" height="30" fill="#00ff00"/><rect x="729" y="143" width="5" height="16" fill="#00ff00"/><rect x="730" y="144" width="3" height="14" fill="#000"/><rect x="739" y="137" width="1" height="11" fill="#00ff00"/><rect x="737" y="143" width="5" height="4" fill="#00ff00"/><rect x="738" y="144" width="3" height="2" fill="#fff"/><rect x="747" y="141" width="1" height="10" fill="#00ff00"/><rect x="745" y="142" width="5" height="5" fill="#00ff00"/><rect x="746" y="143" width="3" height="3" fill="#000"/><rect x="755" y="139" width="1" height="13" fill="#00ff00"/><rect x="753" y="140" width="5" height="4" fill="#00ff00"/><rect x="754" y="141" width="3" height="2" fill="#000"/><rect x="763" y="129" width="1" height="15" fill="#00ff00"/><rect x="761" y="134" width="5" height="7" fill="#00ff00"/><rect x="762" y="135" width="3" height="5" fill="#000"/><rect x="771" y="129" width="1" height="19" fill="#00ff00"/><rect x="769" y="131" width="5" height="5" fill="#00ff00"/><rect x="770" y="132" width="3" height="3" fill="#000"/><rect x="779" y="111" width="1" height="28" fill="#00ff00"/><rect x="777" y="112" width="5" height="20" fill="#00ff00"/><rect x="778" y="113" width="3" height="18" fill="#000"/><rect x="787" y="111" width="1" height="25" fill="#00ff00"/><rect x="785" y="112" width="5" height="24" fill="#00ff00"/><rect x="786" y="113" width="3" height="22" fill="#fff"/><rect x="795" y="127" width="1" height="9" fill="#00ff00"/><rect x="793" y="129" width="5" height="7" fill="#00ff00"/><rect x="794" y="130" width="3" height="5" fill="#000"/><rect x="803" y="127" width="1" height="8" fill="#00ff00"/><rect x="801" y="133" width="5" height="1" fill="#00ff00"/><rect x="811" y="128" width="1" height="12" fill="#00ff00"/><rect x="809" y="133" width="5" height="1" fill="#00ff00"/><rect x="819" y="131" width="1" height="17" fill="#00ff00"/><rect x="817" y="134" width="5" height="11" fill="#00ff00"/><rect x="818" y="135" width="3" height="9" fill="#fff"/><rect x="827" y="121" width="1" height="24" fill="#00ff00"/><rect x="825" y="127" width="5" height="18" fill="#00ff00"/><rect x="826" y="128" width="3" height="16" fill="#000"/><rect x="835" y="122" width="1" height="29" fill="#00ff00"/><rect x="833" y="127" width="5" height="1" fill="#00ff00"/><rect x="843" y="122" width="1" height="18" fill="#00ff00"/><rect x="841" y="123" width="5" height="5" fill="#00ff00"/><rect x="842" y="124" width="3" height="3" fill="#000"/><rect x="851" y="116" width="1" height="22" fill="#00ff00"/><rect x="849" y="117" width="5" height="21" fill="#00ff00"/><rect x="850" y="118" width="3" height="19" fill="#000"/><rect x="859" y="115" width="1" height="9" fill="#00ff00"/><rect x="857" y="117" width="5" height="1" fill="#00ff00"/><rect x="867" y="115" width="1" height="18" fill="#00ff00"/><rect x="865" y="116" width="5" height="16" fill="#00ff00"/><rect x="866" y="117" width="3" height="14" fill="#fff"/><rect x="875" y="110" width="1" height="23" fill="#00ff00"/><rect x="873" y="111" width="5" height="21" fill="#00ff00"/><rect x="874" y="112" width="3" height="19" fill="#000"/><rect x="883" y="100" width="1" height="17" fill="#00ff00"/><rect x="881" y="103" width="5" height="9" fill="#00ff00"/><rect x="882" y="104" width="3" height="7" fill="#000"/><rect x="891" y="98" width="1" height="8" fill="#00ff00"/><rect x="889" y="103" width="5" height="1" fill="#00ff00"/><rect x="899" y="100" width="1" height="10" fill="#00ff00"/><rect x="897" y="104" width="5" height="5" fill="#00ff00"/><rect x="898" y="105" width="3" height="3" fill="#fff"/><rect x="907" y="97" width="1" height="13" fill="#00ff00"/><rect x="905" y="97" width="5" height="12" fill="#00ff00"/><rect x="906" y="98" width="3" height="10" fill="#000"/><rect x="915" y="97" width="1" height="9" fill="#00ff00"/><rect x="913" y="98" width="5" height="2" fill="#00ff00"/><rect x="923" y="96" width="1" height="33" fill="#00ff00"/><rect x="921" y="99" width="5" height="25" fill="#00ff00"/><rect x="922" y="100" width="3" height="23" fill="#fff"/><rect x="931" y="93" width="1" height="34" fill="#00ff00"/><rect x="929" y="97" width="5" height="27" fill="#00ff00"/><rect x="930" y="98" width="3" height="25" fill="#000"/><rect x="939" y="94" width="1" height="11" fill="#00ff00"/><rect x="937" y="98" width="5" height="2" fill="#00ff00"/><rect x="947" y="96" width="1" height="12" fill="#00ff00"/><rect x="945" y="98" width="5" height="8" fill="#00ff00"/><rect x="946" y="99" width="3" height="6" fill="#000"/><rect x="955" y="94" width="1" height="8" fill="#00ff00"/><rect x="953" y="94" width="5" height="5" fill="#00ff00"/><rect x="954" y="95" width="3" height="3" fill="#000"/><rect x="963" y="89" width="1" height="14" fill="#00ff00"/><rect x="961" y="90" width="5" height="5" fill="#00ff00"/><rect x="962" y="91" width="3" height="3" fill="#000"/><rect x="971" y="85" width="1" height="14" fill="#00ff00"/><rect x="969" y="91" width="5" height="3" fill="#00ff00"/><rect x="970" y="92" width="3" height="1" fill="#fff"/><rect x="979" y="76" width="1" height="19" fill="#00ff00"/><rect x="977" y="78" width="5" height="17" fill="#00ff00"/><rect x="978" y="79" width="3" height="15" fill="#000"/><rect x="987" y="70" width="1" height="59" fill="#00ff00"/><rect x="985" y="78" width="5" height="51" fill="#00ff00"/><rect x="986" y="79" width="3" height="49" fill="#fff"/><rect x="995" y="116" width="1" height="16" fill="#00ff00"/><rect x="993" y="123" width="5" height="6" fill="#00ff00"/><rect x="994" y="124" width="3" height="4" fill="#000"/><rect x="1003" y="121" width="1" height="14" fill="#00ff00"/><rect x="1001" y="124" width="5" height="1" fill="#00ff00"/><rect x="1011" y="94" width="1" height="33" fill="#00ff00"/><rect x="1009" y="101" width="5" height="25" fill="#00ff00"/><rect x="1010" y="102" width="3" height="23" fill="#000"/><rect x="1019" y="81" width="1" height="35" fill="#00ff00"/><rect x="1017" y="81" width="5" height="21" fill="#00ff00"/><rect x="1018" y="82" width="3" height="19" fill="#000"/><rect x="1027" y="54" width="1" height="34" fill="#00ff00"/><rect x="1025" y="59" width="5" height="23" fill="#00ff00"/><rect x="1026" y="60" width="3" height="21" fill="#000"/><rect x="1035" y="53" width="1" height="21" fill="#00ff00"/><rect x="1033" y="59" width="5" height="15" fill="#00ff00"/><rect x="1034" y="60" width="3" height="13" fill="#fff"/><rect x="1043" y="66" width="1" height="11" fill="#00ff00"/><rect x="1041" y="69" width="5" height="7" fill="#00ff00"/><rect x="1042" y="70" width="3" height="5" fill="#000"/><rect x="1051" y="56" width="1" height="15" fill="#00ff00"/><rect x="1049" y="65" width="5" height="5" fill="#00ff00"/><rect x="1050" y="66" width="3" height="3" fill="#000"/><rect x="1059" y="57" width="1" height="24" fill="#00ff00"/><rect x="1057" y="65" width="5" height="9" fill="#00ff00"/><rect x="1058" y="66" width="3" height="7" fill="#fff"/><rect x="1067" y="58" width="1" height="24" fill="#00ff00"/><rect x="1065" y="63" width="5" height="12" fill="#00ff00"/><rect x="1066" y="64" width="3" height="10" fill="#000"/><rect x="1075" y="54" width="1" height="28" fill="#00ff00"/><rect x="1073" y="64" width="5" height="1" fill="#00ff00"/><rect x="1083" y="52" width="1" height="16" fill="#00ff00"/><rect x="1081" y="56" width="5" height="10" fill="#00ff00"/><rect x="1082" y="57" width="3" height="8" fill="#000"/><rect x="1091" y="45" width="1" height="19" fill="#00ff00"/><rect x="1089" y="46" width="5" height="18" fill="#00ff00"/><rect x="1090" y="47" width="3" height="16" fill="#000"/><rect x="1099" y="39" width="1" height="12" fill="#00ff00"/><rect x="1097" y="39" width="5" height="9" fill="#00ff00"/><rect x="1098" y="40" width="3" height="7" fill="#000"/><rect x="1107" y="29" width="1" height="13" fill="#00ff00"/><rect x="1105" y="33" width="5" height="8" fill="#00ff00"/><rect x="1106" y="34" width="3" height="6" fill="#000"/><rect x="1115" y="31" width="1" height="23" fill="#00ff00"/><rect x="1113" y="33" width="5" height="17" fill="#00ff00"/><rect x="1114" y="34" width="3" height="15" fill="#fff"/><rect x="1123" y="20" width="1" height="32" fill="#00ff00"/><rect x="1121" y="39" width="5" height="11" fill="#00ff00"/><rect x="1122" y="40" width="3" height="9" fill="#000"/><rect x="1131" y="31" width="1" height="11" fill="#00ff00"/><rect x="1129" y="32" width="5" height="9" fill="#00ff00"/><rect x="1130" y="33" width="3" height="7" fill="#000"/><rect x="1139" y="32" width="1" height="9" fill="#00ff00"/><rect x="1137" y="32" width="5" height="7" fill="#00ff00"/><rect x="1138" y="33" width="3" height="5" fill="#fff"/><rect x="1147" y="36" width="1" height="8" fill="#00ff00"/><rect x="1145" y="37" width="5" height="7" fill="#00ff00"/><rect x="1146" y="38" width="3" height="5" fill="#fff"/><rect x="3" y="458" width="1" height="26" fill="#c0c0c0"/><rect x="11" y="450" width="1" height="34" fill="#c0c0c0"/><rect x="19" y="445" width="1" height="39" fill="#c0c0c0"/><rect x="27" y="440" width="1" height="44" fill="#c0c0c0"/><rect x="35" y="439" width="1" height="45" fill="#c0c0c0"/><rect x="43" y="438" width="1" height="46" fill="#c0c0c0"/><rect x="51" y="437" width="1" height="47" fill="#c0c0c0"/><rect x="59" y="436" width="1" height="48" fill="#c0c0c0"/><rect x="67" y="433" width="1" height="51" fill="#c0c0c0"/><rect x="75" y="432" width="1" height="52" fill="#c0c0c0"/><rect x="83" y="432" width="1" height="52" fill="#c0c0c0"/><rect x="91" y="430" width="1" height="54" fill="#c0c0c0"/><rect x="99" y="429" width="1" height="55" fill="#c0c0c0"/><rect x="107" y="427" width="1" height="57" fill="#c0c0c0"/><rect x="115" y="431" width="1" height="53" fill="#c0c0c0"/><rect x="123" y="434" width="1" height="50" fill="#c0c0c0"/><rect x="131" y="434" width="1" height="50" fill="#c0c0c0"/><rect x="139" y="433" width="1" height="51" fill="#c0c0c0"/><rect x="147" y="439" width="1" height="45" fill="#c0c0c0"/><rect x="155" y="445" width="1" height="39" fill="#c0c0c0"/><rect x="163" y="454" width="1" height="30" fill="#c0c0c0"/><rect x="171" y="463" width="1" height="21" fill="#c0c0c0"/><rect x="179" y="468" width="1" height="16" fill="#c0c0c0"/><rect x="187" y="474" width="1" height="10" fill="#c0c0c0"/><rect x="195" y="473" width="1" height="11" fill="#c0c0c0"/><rect x="203" y="483" width="1" height="1" fill="#c0c0c0"/><rect x="219" y="483" width="1" height="1" fill="#c0c0c0"/><rect x="227" y="480" width="1" height="4" fill="#c0c0c0"/><rect x="235" y="480" width="1" height="4" fill="#c0c0c0"/><rect x="243" y="481" width="1" height="3" fill="#c0c0c0"/><rect x="251" y="474" width="1" height="10" fill="#c0c0c0"/><rect x="259" y="470" width="1" height="14" fill="#c0c0c0"/><rect x="267" y="470" width="1" height="14" fill="#c0c0c0"/><rect x="275" y="466" width="1" height="18" fill="#c0c0c0"/><rect x="283" y="470" width="1" height="14" fill="#c0c0c0"/><rect x="291" y="466" width="1" height="18" fill="#c0c0c0"/><rect x="299" y="460" width="1" height="24" fill="#c0c0c0"/><rect x="307" y="442" width="1" height="42" fill="#c0c0c0"/><rect x="315" y="430" width="1" height="54" fill="#c0c0c0"/><rect x="323" y="420" width="1" height="64" fill="#c0c0c0"/><rect x="331" y="411" width="1" height="73" fill="#c0c0c0"/><rect x="339" y="409" width="1" height="75" fill="#c0c0c0"/><rect x="347" y="407" width="1" height="77" fill="#c0c0c0"/><rect x="355" y="406" width="1" height="78" fill="#c0c0c0"/><rect x="363" y="405" width="1" height="79" fill="#c0c0c0"/><rect x="371" y="405" width="1" height="79" fill="#c0c0c0"/><rect x="379" y="403" width="1" height="81" fill="#c0c0c0"/><rect x="387" y="401" width="1" height="83" fill="#c0c0c0"/><rect x="395" y="404" width="1" height="80" fill="#c0c0c0"/><rect x="403" y="404" width="1" height="80" fill="#c0c0c0"/><rect x="411" y="406" width="1" height="78" fill="#c0c0c0"/><rect x="419" y="405" width="1" height="79" fill="#c0c0c0"/><rect x="427" y="405" width="1" height="79" fill="#c0c0c0"/><rect x="435" y="406" width="1" height="78" fill="#c0c0c0"/><rect x="443" y="410" width="1" height="74" fill="#c0c0c0"/><rect x="451" y="404" width="1" height="80" fill="#c0c0c0"/><rect x="459" y="395" width="1" height="89" fill="#c0c0c0"/><rect x="467" y="386" width="1" height="98" fill="#c0c0c0"/><rect x="475" y="385" width="1" height="99" fill="#c0c0c0"/><rect x="483" y="391" width="1" height="93" fill="#c0c0c0"/><rect x="491" y="396" width="1" height="88" fill="#c0c0c0"/><rect x="499" y="400" width="1" height="84" fill="#c0c0c0"/><rect x="507" y="406" width="1" height="78" fill="#c0c0c0"/><rect x="515" y="407" width="1" height="77" fill="#c0c0c0"/><rect x="523" y="408" width="1" height="76" fill="#c0c0c0"/><rect x="531" y="414" width="1" height="70" fill="#c0c0c0"/><rect x="539" y="418" width="1" height="66" fill="#c0c0c0"/><rect x="547" y="411" width="1" height="73" fill="#c0c0c0"/><rect x="555" y="409" width="1" height="75" fill="#c0c0c0"/><rect x="563" y="404" width="1" height="80" fill="#c0c0c0"/><rect x="571" y="404" width="1" height="80" fill="#c0c0c0"/><rect x="579" y="399" width="1" height="85" fill="#c0c0c0"/><rect x="587" y="398" width="1" height="86" fill="#c0c0c0"/><rect x="595" y="391" width="1" height="93" fill="#c0c0c0"/><rect x="603" y="389" width="1" height="95" fill="#c0c0c0"/><rect x="611" y="391" width="1" height="93" fill="#c0c0c0"/><rect x="619" y="389" width="1" height="95" fill="#c0c0c0"/><rect x="627" y="387" width="1" height="97" fill="#c0c0c0"/><rect x="635" y="394" width="1" height="90" fill="#c0c0c0"/><rect x="643" y="393" width="1" height="91" fill="#c0c0c0"/><rect x="651" y="394" width="1" height="90" fill="#c0c0c0"/><rect x="659" y="398" width="1" height="86" fill="#c0c0c0"/><rect x="667" y="400" width="1" height="84" fill="#c0c0c0"/><rect x="675" y="399" width="1" height="85" fill="#c0c0c0"/><rect x="683" y="406" width="1" height="78" fill="#c0c0c0"/><rect x="691" y="403" width="1" height="81" fill="#c0c0c0"/><rect x="699" y="399" width="1" height="85" fill="#c0c0c0"/><rect x="707" y="395" width="1" height="89" fill="#c0c0c0"/><rect x="715" y="394" width="1" height="90" fill="#c0c0c0"/><rect x="723" y="388" width="1" height="96" fill="#c0c0c0"/><rect x="731" y="376" width="1" height="108" fill="#c0c0c0"/><rect x="739" y="369" width="1" height="115" fill="#c0c0c0"/><rect x="747" y="365" width="1" height="119" fill="#c0c0c0"/><rect x="755" y="360" width="1" height="124" fill="#c0c0c0"/><rect x="763" y="355" width="1" height="129" fill="#c0c0c0"/><rect x="771" y="352" width="1" height="132" fill="#c0c0c0"/><rect x="779" y="341" width="1" height="143" fill="#c0c0c0"/><rect x="787" y="345" width="1" height="139" fill="#c0c0c0"/><rect x="795" y="348" width="1" height="136" fill="#c0c0c0"/><rect x="803" y="353" width="1" height="131" fill="#c0c0c0"/><rect x="811" y="359" width="1" height="125" fill="#c0c0c0"/><rect x="819" y="370" width="1" height="114" fill="#c0c0c0"/><rect x="827" y="372" width="1" height="112" fill="#c0c0c0"/><rect x="835" y="375" width="1" height="109" fill="#c0c0c0"/><rect x="843" y="376" width="1" height="108" fill="#c0c0c0"/><rect x="851" y="374" width="1" height="110" fill="#c0c0c0"/><rect x="859" y="375" width="1" height="109" fill="#c0c0c0"/><rect x="867" y="382" width="1" height="102" fill="#c0c0c0"/><rect x="875" y="381" width="1" height="103" fill="#c0c0c0"/><rect x="883" y="376" width="1" height="108" fill="#c0c0c0"/><rect x="891" y="374" width="1" height="110" fill="#c0c0c0"/><rect x="899" y="376" width="1" height="108" fill="#c0c0c0"/><rect x="907" y="374" width="1" height="110" fill="#c0c0c0"/><rect x="915" y="374" width="1" height="110" fill="#c0c0c0"/><rect x="923" y="387" width="1" height="97" fill="#c0c0c0"/><rect x="931" y="385" width="1" height="99" fill="#c0c0c0"/><rect x="939" y="386" width="1" height="98" fill="#c0c0c0"/><rect x="947" y="388" width="1" height="96" fill="#c0c0c0"/><rect x="955" y="388" width="1" height="96" fill="#c0c0c0"/><rect x="963" y="387" width="1" height="97" fill="#c0c0c0"/><rect x="971" y="390" width="1" height="94" fill="#c0c0c0"/><rect x="979" y="384" width="1" height="100" fill="#c0c0c0"/><rect x="987" y="407" width="1" height="77" fill="#c0c0c0"/><rect x="995" y="423" width="1" height="61" fill="#c0c0c0"/><rect x="1003" y="437" width="1" height="47" fill="#c0c0c0"/><rect x="1011" y="437" width="1" height="47" fill="#c0c0c0"/><rect x="1019" y="427" width="1" height="57" fill="#c0c0c0"/><rect x="1027" y="409" width="1" height="75" fill="#c0c0c0"/><rect x="1035" y="402" width="1" height="82" fill="#c0c0c0"/><rect x="1043" y="396" width="1" height="88" fill="#c0c0c0"/><rect x="1051" y="390" width="1" height="94" fill="#c0c0c0"/><rect x="1059" y="387" width="1" height="97" fill="#c0c0c0"/><rect x="1067" y="387" width="1" height="97" fill="#c0c0c0"/><rect x="1075" y="386" width="1" height="98" fill="#c0c0c0"/><rect x="1083" y="382" width="1" height="102" fill="#c0c0c0"/><rect x="1091" y="375" width="1" height="109" fill="#c0c0c0"/><rect x="1099" y="367" width="1" height="117" fill="#c0c0c0"/><rect x="1107" y="359" width="1" height="125" fill="#c0c0c0"/><rect x="1115" y="362" width="1" height="122" fill="#c0c0c0"/><rect x="1123" y="361" width="1" height="123" fill="#c0c0c0"/><rect x="1131" y="358" width="1" height="126" fill="#c0c0c0"/><rect x="1139" y="360" width="1" height="124" fill="#c0c0c0"/><rect x="1147" y="366" width="1" height="118" fill="#c0c0c0"/></svg>
<svg style="left:222px;top:699px" width="1213" height="504"><polyline points="3.4,485.2 11.4,479.9 24.8,467.8 35.6,459.2 51.6,447.7 67.7,439.6 83.8,435.1 99.9,432.9 110.7,431.6 132.1,431.6 148.2,432.4 158.9,434.3 172.4,441.0 185.8,449.0 199.2,455.7 212.6,464.6 226.0,471.8 239.4,477.2 252.8,478.5 266.2,478.5 279.7,475.8 293.1,473.2 306.5,466.5 319.9,457.1 333.3,443.7 346.7,431.6 360.1,422.2 373.5,414.2 378.0,409.3 386.9,407.4 394.1,404.8 418.2,403.4 453.1,404.0 466.5,401.3 485.3,397.5 498.7,396.2 522.8,396.2 538.9,402.9 552.4,407.4 571.1,408.8 587.2,406.1 606.0,401.3 619.4,395.9 635.5,392.2 659.7,392.2 681.1,394.8 694.5,396.7 716.0,398.6 732.1,394.0 748.2,387.3 758.0,379.5 758.9,382.0 768.0,375.3 772.3,371.0 786.5,361.0 803.7,352.4 817.9,352.4 837.9,356.7 852.2,362.4 872.2,372.4 886.4,375.2 912.1,376.1 917.8,375.2 929.2,378.1 952.1,380.1 963.5,382.4 980.6,384.7 994.9,392.4 1009.1,403.8 1023.4,408.6 1034.8,410.9 1043.4,413.2 1057.7,412.3 1071.9,403.8 1086.2,393.2 1100.5,383.8 1114.7,376.7 1129.0,371.0 1146.7,365.2" fill="none" stroke="#ff0000" stroke-width="1" stroke-dasharray="2.5 2.5"/></svg>
<svg style="left:222px;top:699px" width="1213" height="504" shape-rendering="crispEdges"><rect x="2.5" y="3.5" width="1166" height="326" fill="none" stroke="#fff"/><rect x="2.5" y="331.5" width="1166" height="162" fill="none" stroke="#fff"/><rect x="1169" y="29" width="3" height="1" fill="#fff"/><rect x="1169" y="62" width="3" height="1" fill="#fff"/><rect x="1169" y="95" width="3" height="1" fill="#fff"/><rect x="1169" y="128" width="3" height="1" fill="#fff"/><rect x="1169" y="161" width="3" height="1" fill="#fff"/><rect x="1169" y="194" width="3" height="1" fill="#fff"/><rect x="1169" y="227" width="3" height="1" fill="#fff"/><rect x="1169" y="260" width="3" height="1" fill="#fff"/><rect x="1169" y="293" width="3" height="1" fill="#fff"/><rect x="1169" y="326" width="3" height="1" fill="#fff"/><rect x="1169" y="332" width="3" height="1" fill="#fff"/><rect x="1169" y="484" width="3" height="1" fill="#fff"/><rect x="3" y="494" width="1" height="3" fill="#fff"/><rect x="67" y="494" width="1" height="3" fill="#fff"/><rect x="131" y="494" width="1" height="3" fill="#fff"/><rect x="195" y="494" width="1" height="3" fill="#fff"/><rect x="259" y="494" width="1" height="3" fill="#fff"/><rect x="323" y="494" width="1" height="3" fill="#fff"/><rect x="387" y="494" width="1" height="3" fill="#fff"/><rect x="451" y="494" width="1" height="3" fill="#fff"/><rect x="515" y="494" width="1" height="3" fill="#fff"/><rect x="579" y="494" width="1" height="3" fill="#fff"/><rect x="643" y="494" width="1" height="3" fill="#fff"/><rect x="707" y="494" width="1" height="3" fill="#fff"/><rect x="771" y="494" width="1" height="3" fill="#fff"/><rect x="835" y="494" width="1" height="3" fill="#fff"/><rect x="899" y="494" width="1" height="3" fill="#fff"/><rect x="963" y="494" width="1" height="3" fill="#fff"/><rect x="1027" y="494" width="1" height="3" fill="#fff"/><rect x="1091" y="494" width="1" height="3" fill="#fff"/></svg>
<div class="t" style="top:702.5px;font-size:11px;line-height:15px;color:#fff;left:229px;transform-origin:0 0;transform:scaleX(0.891);">USDCHF,H4</div>
<div class="t" style="top:702.5px;font-size:11px;line-height:15px;color:#fff;left:290px;transform-origin:0 0;transform:scaleX(0.842);">0.99268 0.99286 0.99115 0.99127</div>
<div class="t" style="top:1032.0px;font-size:11px;line-height:15px;color:#fff;left:229px;transform-origin:0 0;transform:scaleX(0.852);">MACD(12,26,9) 0.00417 0.00417</div>
<div class="t" style="top:721.0px;font-size:11px;line-height:15px;color:#fff;left:1395px;transform-origin:0 0;transform:scaleX(0.830);">0.99440</div>
<div class="t" style="top:754.0px;font-size:11px;line-height:15px;color:#fff;left:1395px;transform-origin:0 0;transform:scaleX(0.830);">0.98700</div>
<div class="t" style="top:787.0px;font-size:11px;line-height:15px;color:#fff;left:1395px;transform-origin:0 0;transform:scaleX(0.830);">0.97940</div>
<div class="t" style="top:820.0px;font-size:11px;line-height:15px;color:#fff;left:1395px;transform-origin:0 0;transform:scaleX(0.830);">0.97200</div>
<div class="t" style="top:853.0px;font-size:11px;line-height:15px;color:#fff;left:1395px;transform-origin:0 0;transform:scaleX(0.830);">0.96460</div>
<div class="t" style="top:886.0px;font-size:11px;line-height:15px;color:#fff;left:1395px;transform-origin:0 0;transform:scaleX(0.830);">0.95720</div>
<div class="t" style="top:919.0px;font-size:11px;line-height:15px;color:#fff;left:1395px;transform-origin:0 0;transform:scaleX(0.830);">0.94960</div>
<div class="t" style="top:952.0px;font-size:11px;line-height:15px;color:#fff;left:1395px;transform-origin:0 0;transform:scaleX(0.830);">0.94220</div>
<div class="t" style="top:985.0px;font-size:11px;line-height:15px;color:#fff;left:1395px;transform-origin:0 0;transform:scaleX(0.830);">0.93480</div>
<div class="t" style="top:1018.0px;font-size:11px;line-height:15px;color:#fff;left:1395px;transform-origin:0 0;transform:scaleX(0.830);">0.92740</div>
<div style="left:1391px;top:737px;width:42px;height:12px;background:#fff;"></div>
<div class="t" style="top:735.5px;font-size:11px;line-height:15px;color:#000;left:1395px;transform-origin:0 0;transform:scaleX(0.830);">0.99127</div>
<div class="t" style="top:1030.5px;font-size:11px;line-height:15px;color:#fff;left:1393px;transform-origin:0 0;transform:scaleX(0.832);">0.0053</div>
<div class="t" style="top:1173.5px;font-size:11px;line-height:15px;color:#fff;left:1393px;transform-origin:0 0;transform:scaleX(0.794);">0.00</div>
<div class="t" style="top:1178.0px;font-size:11px;line-height:15px;color:#fff;left:1396px;transform-origin:0 0;transform:scaleX(0.760);">-0.00031</div>
<div class="t" style="top:1194.5px;font-size:11px;line-height:15px;color:#fff;left:224px;transform-origin:0 0;transform:scaleX(0.911);">6 Apr 2022</div>
<div class="t" style="top:1194.5px;font-size:11px;line-height:15px;color:#fff;left:288px;transform-origin:0 0;transform:scaleX(0.948);">7 Apr 16:00</div>
<div class="t" style="top:1194.5px;font-size:11px;line-height:15px;color:#fff;left:352px;transform-origin:0 0;transform:scaleX(0.945);">11 Apr 00:00</div>
<div class="t" style="top:1194.5px;font-size:11px;line-height:15px;color:#fff;left:416px;transform-origin:0 0;transform:scaleX(0.933);">12 Apr 08:00</div>
<div class="t" style="top:1194.5px;font-size:11px;line-height:15px;color:#fff;left:480px;transform-origin:0 0;transform:scaleX(0.933);">13 Apr 16:00</div>
<div class="t" style="top:1194.5px;font-size:11px;line-height:15px;color:#fff;left:544px;transform-origin:0 0;transform:scaleX(0.933);">15 Apr 00:00</div>
<div class="t" style="top:1194.5px;font-size:11px;line-height:15px;color:#fff;left:608px;transform-origin:0 0;transform:scaleX(0.933);">18 Apr 08:00</div>
<div class="t" style="top:1194.5px;font-size:11px;line-height:15px;color:#fff;left:672px;transform-origin:0 0;transform:scaleX(0.933);">19 Apr 16:00</div>
<div class="t" style="top:1194.5px;font-size:11px;line-height:15px;color:#fff;left:736px;transform-origin:0 0;transform:scaleX(0.933);">21 Apr 00:00</div>
<div class="t" style="top:1194.5px;font-size:11px;line-height:15px;color:#fff;left:800px;transform-origin:0 0;transform:scaleX(0.933);">22 Apr 08:00</div>
<div class="t" style="top:1194.5px;font-size:11px;line-height:15px;color:#fff;left:864px;transform-origin:0 0;transform:scaleX(0.933);">25 Apr 16:00</div>
<div class="t" style="top:1194.5px;font-size:11px;line-height:15px;color:#fff;left:928px;transform-origin:0 0;transform:scaleX(0.933);">27 Apr 00:00</div>
<div class="t" style="top:1194.5px;font-size:11px;line-height:15px;color:#fff;left:992px;transform-origin:0 0;transform:scaleX(0.933);">28 Apr 08:00</div>
<div class="t" style="top:1194.5px;font-size:11px;line-height:15px;color:#fff;left:1056px;transform-origin:0 0;transform:scaleX(0.933);">29 Apr 16:00</div>
<div class="t" style="top:1194.5px;font-size:11px;line-height:15px;color:#fff;left:1120px;transform-origin:0 0;transform:scaleX(0.881);">3 May 00:00</div>
<div class="t" style="top:1194.5px;font-size:11px;line-height:15px;color:#fff;left:1184px;transform-origin:0 0;transform:scaleX(0.881);">4 May 08:00</div>
<div class="t" style="top:1194.5px;font-size:11px;line-height:15px;color:#fff;left:1248px;transform-origin:0 0;transform:scaleX(0.881);">5 May 16:00</div>
<div class="t" style="top:1194.5px;font-size:11px;line-height:15px;color:#fff;left:1312px;transform-origin:0 0;transform:scaleX(0.881);">9 May 00:00</div>
<div style="left:1446px;top:108px;width:2px;height:1097px;background:#6a6a6a;"></div>
<div style="left:1448px;top:108px;width:3px;height:1097px;background:#a9a9a9;"></div>
<div style="left:1451px;top:108px;width:3px;height:1097px;background:#e6e6e6;"></div>
<div style="left:212px;top:666px;width:1234px;height:1px;background:#6a6a6a;"></div>
<div style="left:209px;top:1203px;width:1245px;height:2px;background:#fff;"></div>
<div style="left:209px;top:1205px;width:1245px;height:1px;background:#000;"></div>
<div style="left:209px;top:1206px;width:1245px;height:18px;background:#f0f0f0;"></div>
<div style="left:209px;top:1206px;width:2px;height:18px;background:#888;"></div>
<div class="t" style="top:1206.0px;font-size:12px;line-height:16px;color:#8a8090;left:226px;transform-origin:0 0;transform:scaleX(0.879);">EURUSD,H4</div>
<div style="left:300px;top:1208px;width:1px;height:13px;background:#555;"></div>
<div class="t" style="top:1206.0px;font-size:12px;line-height:16px;color:#8a8090;left:309px;transform-origin:0 0;transform:scaleX(0.935);">USDCHF,H4</div>
<div style="left:383px;top:1208px;width:1px;height:13px;background:#555;"></div>
<div class="t" style="top:1206.0px;font-size:12px;line-height:16px;color:#8a8090;left:394px;transform-origin:0 0;transform:scaleX(0.894);">GBPUSD,H4</div>
<div style="left:467px;top:1204px;width:80px;height:19px;background:#fff;border:1px solid #000;border-top:none;box-shadow:1px 1px 0 #666;"></div>
<div class="t" style="top:1205.5px;font-size:12px;line-height:16px;color:#000;left:478px;transform-origin:0 0;transform:scaleX(0.884);">USDJPY,H1</div>
<svg style="left:1418px;top:1208px" width="30" height="11"><path d="M8 1.5L3 5.5 8 9.5z" fill="#aaa"/><path d="M21 1.5L26 5.5 21 9.5z" fill="#aaa"/></svg>
<div style="left:0px;top:1224px;width:1454px;height:137px;background:#f0f0f0;"></div>
<div style="left:0px;top:1223px;width:210px;height:1px;background:#999;"></div>
<div style="left:0px;top:1224px;width:1454px;height:1px;background:#fafafa;"></div>
<div style="left:0px;top:1229px;width:1454px;height:1px;background:#a8a8a8;"></div>
<svg style="left:5px;top:1231px" width="8" height="8"><path d="M1 1L7 7M7 1L1 7" stroke="#000" stroke-width="1.6"/></svg>
<div style="left:3px;top:1243px;width:12px;height:112px;background:linear-gradient(#cbd9e8,#dce7f2);"></div>
<div class="t" style="left:-19px;top:1326px;width:56px;height:12px;font-size:11.5px;line-height:12px;color:#222;transform:rotate(-90deg) scaleX(0.8);transform-origin:50% 50%;text-align:center;">ターミナル</div>
<div style="left:17px;top:1230px;width:1437px;height:105px;background:#fff;border-left:1px solid #c0c0c0;"></div>
<div style="left:18px;top:1253px;width:1436px;height:1px;background:#e5e5e5;"></div>
<div style="left:158px;top:1230px;width:1px;height:23px;background:#e5e5e5;"></div>
<div style="left:354px;top:1230px;width:1px;height:23px;background:#e5e5e5;"></div>
<div style="left:452px;top:1230px;width:1px;height:23px;background:#e5e5e5;"></div>
<div style="left:528px;top:1230px;width:1px;height:23px;background:#e5e5e5;"></div>
<div style="left:626px;top:1230px;width:1px;height:23px;background:#e5e5e5;"></div>
<div style="left:735px;top:1230px;width:1px;height:23px;background:#e5e5e5;"></div>
<div style="left:844px;top:1230px;width:1px;height:23px;background:#e5e5e5;"></div>
<div style="left:953px;top:1230px;width:1px;height:23px;background:#e5e5e5;"></div>
<div style="left:1062px;top:1230px;width:1px;height:23px;background:#e5e5e5;"></div>
<div style="left:1171px;top:1230px;width:1px;height:23px;background:#e5e5e5;"></div>
<div style="left:1280px;top:1230px;width:1px;height:23px;background:#e5e5e5;"></div>
<div class="t" style="top:1234.0px;font-size:12.5px;line-height:17px;color:#000;left:23px;transform-origin:0 0;transform:scaleX(0.981);">注文番号</div>
<div class="t" style="top:1238.0px;font-size:9px;line-height:12px;color:#777;left:86px;transform-origin:0 0;">/</div>
<div class="t" style="top:1234.0px;font-size:12.5px;line-height:17px;color:#000;right:1105px;transform-origin:100% 0;transform:scaleX(0.962);">時間</div>
<div class="t" style="top:1234.0px;font-size:12.5px;line-height:17px;color:#000;right:1007px;transform-origin:100% 0;transform:scaleX(0.981);">取引種別</div>
<div class="t" style="top:1234.0px;font-size:12.5px;line-height:17px;color:#000;right:931px;transform-origin:100% 0;transform:scaleX(0.962);">数量</div>
<div class="t" style="top:1234.0px;font-size:12.5px;line-height:17px;color:#000;right:832px;transform-origin:100% 0;transform:scaleX(0.981);">通貨ペア</div>
<div class="t" style="top:1234.0px;font-size:12.5px;line-height:17px;color:#000;right:724px;transform-origin:100% 0;transform:scaleX(0.962);">価格</div>
<div class="t" style="top:1234.0px;font-size:12.5px;line-height:17px;color:#000;left:749px;transform-origin:0 0;transform:scaleX(0.966);">決済逆指値(S/L)</div>
<div class="t" style="top:1234.0px;font-size:12.5px;line-height:17px;color:#000;left:870px;transform-origin:0 0;transform:scaleX(0.965);">決済指値(T/P)</div>
<div class="t" style="top:1234.0px;font-size:12.5px;line-height:17px;color:#000;right:397px;transform-origin:100% 0;transform:scaleX(0.962);">価格</div>
<div class="t" style="top:1234.0px;font-size:12.5px;line-height:17px;color:#000;right:288px;transform-origin:100% 0;transform:scaleX(0.974);">手数料</div>
<div class="t" style="top:1234.0px;font-size:12.5px;line-height:17px;color:#000;right:179px;transform-origin:100% 0;transform:scaleX(0.731);">スワップ</div>
<div class="t" style="top:1234.0px;font-size:12.5px;line-height:17px;color:#000;right:11px;transform-origin:100% 0;transform:scaleX(0.962);">損益</div>
<div style="left:18px;top:1254px;width:1436px;height:20px;background:#c8c8c8;"></div>
<svg style="left:22px;top:1258px" width="11" height="11"><circle cx="5.5" cy="5.5" r="4" fill="#ddd" stroke="#888"/></svg>
<div class="t" style="top:1256.0px;font-size:12.5px;line-height:17px;color:#000;font-weight:bold;left:39px;transform-origin:0 0;transform:scaleX(0.957);">残高: 100 000.00 JPY</div>
<div class="t" style="top:1256.0px;font-size:12.5px;line-height:17px;color:#000;font-weight:bold;left:169px;transform-origin:0 0;transform:scaleX(1.013);">有効証拠金: 100 000.00</div>
<div class="t" style="top:1256.0px;font-size:12.5px;line-height:17px;color:#000;font-weight:bold;left:313px;transform-origin:0 0;transform:scaleX(1.013);">余剰証拠金: 100 000.00</div>
<div class="t" style="top:1256.0px;font-size:12.5px;line-height:17px;color:#000;font-weight:bold;right:11px;transform-origin:100% 0;transform:scaleX(0.986);">0.00</div>
<div style="left:17px;top:1335px;width:1437px;height:1px;background:#111;"></div>
<div style="left:19px;top:1335px;width:46px;height:20px;background:#fff;border:1px solid #111;border-top:none;box-shadow:1px 1px 0 #555;"></div>
<div class="t" style="top:1336.0px;font-size:12.5px;line-height:17px;color:#000;left:29px;transform-origin:0 0;">取引</div>
<div class="t" style="top:1336.0px;font-size:12.5px;line-height:17px;color:#707070;left:75px;transform-origin:0 0;">運用比率</div>
<div class="t" style="top:1336.0px;font-size:12.5px;line-height:17px;color:#707070;left:147px;transform-origin:0 0;">口座履歴</div>
<div class="t" style="top:1336.0px;font-size:12.5px;line-height:17px;color:#707070;left:219px;transform-origin:0 0;transform:scaleX(0.788);">ニュース</div>
<div class="t" style="top:1343.0px;font-size:9px;line-height:12px;color:#ee1111;font-weight:bold;left:261px;transform-origin:0 0;transform:scaleX(1.098);">99</div>
<div class="t" style="top:1336.0px;font-size:12.5px;line-height:17px;color:#707070;left:291px;transform-origin:0 0;transform:scaleX(0.846);">アラーム設定</div>
<div class="t" style="top:1336.0px;font-size:12.5px;line-height:17px;color:#707070;left:378px;transform-origin:0 0;transform:scaleX(0.747);">メールボックス</div>
<div class="t" style="top:1343.0px;font-size:9px;line-height:12px;color:#ee1111;font-weight:bold;left:447px;transform-origin:0 0;transform:scaleX(1.097);">7</div>
<div class="t" style="top:1336.0px;font-size:12.5px;line-height:17px;color:#707070;left:474px;transform-origin:0 0;transform:scaleX(0.800);">マーケット</div>
<div class="t" style="top:1343.0px;font-size:9px;line-height:12px;color:#ee1111;font-weight:bold;left:527px;transform-origin:0 0;transform:scaleX(1.098);">159</div>
<div class="t" style="top:1336.0px;font-size:12.5px;line-height:17px;color:#707070;left:559px;transform-origin:0 0;">記事</div>
<div class="t" style="top:1336.0px;font-size:12.5px;line-height:17px;color:#707070;left:605px;transform-origin:0 0;transform:scaleX(0.692);">ライブラリ</div>
<div class="t" style="top:1336.0px;font-size:12.5px;line-height:17px;color:#707070;left:670px;transform-origin:0 0;transform:scaleX(0.795);">エキスパート</div>
<div class="t" style="top:1336.0px;font-size:12.5px;line-height:17px;color:#707070;left:752px;transform-origin:0 0;transform:scaleX(0.981);">操作履歴</div>
<div style="left:137px;top:1338px;width:1px;height:14px;background:#666;"></div>
<div style="left:209px;top:1338px;width:1px;height:14px;background:#666;"></div>
<div style="left:281px;top:1338px;width:1px;height:14px;background:#666;"></div>
<div style="left:368px;top:1338px;width:1px;height:14px;background:#666;"></div>
<div style="left:465px;top:1338px;width:1px;height:14px;background:#666;"></div>
<div style="left:548px;top:1338px;width:1px;height:14px;background:#666;"></div>
<div style="left:595px;top:1338px;width:1px;height:14px;background:#666;"></div>
<div style="left:660px;top:1338px;width:1px;height:14px;background:#666;"></div>
<div style="left:742px;top:1338px;width:1px;height:14px;background:#666;"></div>
<div style="left:815px;top:1338px;width:1px;height:14px;background:#666;"></div>
<div style="left:0px;top:1357px;width:1454px;height:1px;background:#fff;"></div>
<div style="left:0px;top:1359px;width:1454px;height:1px;background:#c0c0c0;"></div>
<div style="left:0px;top:1360px;width:1454px;height:25px;background:#f0f0f0;"></div>
<div class="t" style="top:1364.5px;font-size:12.5px;line-height:17px;color:#000;left:3px;transform-origin:0 0;transform:scaleX(0.850);">F1キーでヘルプが表示されます</div>
<div style="left:740px;top:1364px;width:1px;height:19px;background:#a0a0a0;"></div>
<div style="left:857px;top:1364px;width:1px;height:19px;background:#a0a0a0;"></div>
<div style="left:958px;top:1364px;width:1px;height:19px;background:#a0a0a0;"></div>
<div style="left:1029px;top:1364px;width:1px;height:19px;background:#a0a0a0;"></div>
<div style="left:1100px;top:1364px;width:1px;height:19px;background:#a0a0a0;"></div>
<div style="left:1168px;top:1364px;width:1px;height:19px;background:#a0a0a0;"></div>
<div style="left:1238px;top:1364px;width:1px;height:19px;background:#a0a0a0;"></div>
<div style="left:1305px;top:1364px;width:1px;height:19px;background:#a0a0a0;"></div>
<div class="t" style="top:1365.0px;font-size:12px;line-height:16px;color:#000;left:746px;transform-origin:0 0;">Default</div>
<svg style="left:1310px;top:1366px" width="24" height="12"><rect x="0" y="0" width="2" height="12" fill="#2a7a2a"/><rect x="3" y="0" width="2" height="12" fill="#2a7a2a"/><rect x="6" y="0" width="2" height="12" fill="#2a7a2a"/><rect x="9" y="0" width="2" height="12" fill="#2a7a2a"/><rect x="12" y="0" width="2" height="12" fill="#2a7a2a"/><rect x="15" y="0" width="2" height="12" fill="#333"/><rect x="18" y="2" width="2" height="10" fill="#333"/><rect x="21" y="2" width="2" height="10" fill="#333"/></svg>
<div class="t" style="top:1365.0px;font-size:12px;line-height:16px;color:#000;left:1337px;transform-origin:0 0;transform:scaleX(0.960);">5200/10 kb</div>
<svg style="left:1440px;top:1371px" width="13" height="13"><path d="M12 2L2 12M12 6L6 12M12 10L10 12" stroke="#999"/></svg>
<div style="left:9px;top:52px;width:450px;height:306px;background:#f0f0f0;border:1px solid #bdbdbd;border-radius:8px;box-shadow:0 0 3px rgba(0,0,0,0.2),0 14px 44px rgba(0,0,0,0.5);z-index:20;overflow:hidden;"><div style="left:0;top:0;width:450px;height:30px;background:#fff;"></div></div>
<svg style="z-index:21;left:16px;top:57px" width="17" height="17"><rect x="5" y="1" width="7" height="6" rx="1" fill="#f3c9c9" stroke="#c03030"/><rect x="8" y="5" width="8" height="8" rx="1" fill="#bcd8f5" stroke="#2a6ab0"/><rect x="1" y="7" width="9" height="9" rx="2" fill="#43c043" stroke="#1a7a1a"/></svg>
<div class="t" style="z-index:22;top:57.5px;font-size:13.5px;line-height:18px;color:#000;left:38px;transform-origin:0 0;transform:scaleX(0.755);">通貨ペアリスト</div>
<div class="t" style="z-index:22;top:58.0px;font-size:12px;line-height:16px;color:#000;left:391px;transform:translateX(-50%) scaleX(1.000);transform-origin:50% 0;">?</div>
<svg style="z-index:21;left:430px;top:60px" width="12" height="12"><path d="M1 1L11 11M11 1L1 11" stroke="#222" stroke-width="1.1"/></svg>
<div style="z-index:21;left:17px;top:90px;width:332px;height:258px;background:#f0f0f0;border:1px solid #a9a9a9;"></div>
<div style="z-index:21;left:18px;top:91px;width:313px;height:238px;background:#fff;"></div>
<div style="z-index:21;left:338px;top:109px;width:2px;height:34px;background:#8a8a8a;"></div>
<div style="z-index:21;left:36px;top:337px;width:265px;height:2px;background:#8a8a8a;"></div>
<svg style="z-index:21;left:24px;top:94px" width="16" height="15"><rect x="0.5" y="0.5" width="10" height="8" fill="#eaf3fb" stroke="#6aa6d8"/><rect x="4.5" y="5.5" width="11" height="9" fill="#fff" stroke="#5b9bd5"/><path d="M6 11l2-2 2 3 2-3 2 2" stroke="#5b9bd5" fill="none"/></svg>
<div class="t" style="z-index:22;top:93.0px;font-size:12.5px;line-height:17px;color:#000;left:44px;transform-origin:0 0;transform:scaleX(0.864);">HotForex MT4</div>
<div style="z-index:21;left:31px;top:126px;width:1px;height:203px;border-left:1px dotted #777;"></div>
<div style="z-index:21;left:52px;top:128px;width:1px;height:201px;border-left:1px dotted #777;"></div>
<div style="z-index:21;left:27px;top:115px;width:9px;height:9px;background:#fff;border:1px solid #999;"></div>
<div style="z-index:21;left:29px;top:119px;width:5px;height:1px;background:#333;"></div>
<div style="z-index:21;left:36px;top:120px;width:6px;height:1px;border-top:1px dotted #777;"></div>
<svg style="z-index:21;left:42px;top:109px" width="20" height="19"><rect x="3" y="1" width="10" height="8" rx="2" fill="#f2d064" stroke="#a88a20"/><rect x="8" y="4" width="10" height="11" rx="2" fill="#7ab8ee" stroke="#2a6ab0"/><rect x="1" y="7" width="10" height="11" rx="2" fill="#3fc03f" stroke="#1a7a1a"/><text x="6" y="16" font-size="8" fill="#0a4a0a" text-anchor="middle" font-family="Liberation Sans">$</text></svg>
<div style="z-index:21;left:64px;top:110px;width:32px;height:18px;background:#0078d7;"></div>
<div class="t" style="z-index:22;top:111.0px;font-size:12.5px;line-height:17px;color:#fff;left:66px;transform-origin:0 0;transform:scaleX(0.876);">Forex</div>
<div style="z-index:21;left:53px;top:137px;width:11px;height:1px;border-top:1px dotted #777;"></div>
<svg style="z-index:21;left:64px;top:128px" width="17" height="17"><rect x="1" y="1" width="15" height="15" rx="3" fill="#f7d467" stroke="#b08a20"/><text x="8.5" y="13" font-size="11" fill="#7a5a00" text-anchor="middle" font-family="Liberation Sans">$</text></svg>
<div class="t" style="z-index:22;top:129.0px;font-size:12.5px;line-height:17px;color:#000;left:86px;transform-origin:0 0;transform:scaleX(0.841);">AUDCAD&nbsp; (Australian Dollar vs Canadian Dollar)</div>
<div style="z-index:21;left:53px;top:155px;width:11px;height:1px;border-top:1px dotted #777;"></div>
<svg style="z-index:21;left:64px;top:146px" width="17" height="17"><rect x="1" y="1" width="15" height="15" rx="3" fill="#f7d467" stroke="#b08a20"/><text x="8.5" y="13" font-size="11" fill="#7a5a00" text-anchor="middle" font-family="Liberation Sans">$</text></svg>
<div class="t" style="z-index:22;top:147.0px;font-size:12.5px;line-height:17px;color:#000;left:86px;transform-origin:0 0;transform:scaleX(0.835);">AUDCHF&nbsp; (Australian Dollar vs Swiss Franc)</div>
<div style="z-index:21;left:53px;top:173px;width:11px;height:1px;border-top:1px dotted #777;"></div>
<svg style="z-index:21;left:64px;top:164px" width="17" height="17"><rect x="1" y="1" width="15" height="15" rx="3" fill="#f7d467" stroke="#b08a20"/><text x="8.5" y="13" font-size="11" fill="#7a5a00" text-anchor="middle" font-family="Liberation Sans">$</text></svg>
<div class="t" style="z-index:22;top:165.0px;font-size:12.5px;line-height:17px;color:#000;left:86px;transform-origin:0 0;transform:scaleX(0.842);">AUDJPY&nbsp; (Australian Dollar vs Japanese Yen)</div>
<div style="z-index:21;left:53px;top:191px;width:11px;height:1px;border-top:1px dotted #777;"></div>
<svg style="z-index:21;left:64px;top:182px" width="17" height="17"><rect x="1" y="1" width="15" height="15" rx="3" fill="#f7d467" stroke="#b08a20"/><text x="8.5" y="13" font-size="11" fill="#7a5a00" text-anchor="middle" font-family="Liberation Sans">$</text></svg>
<div class="t" style="z-index:22;top:183.0px;font-size:12.5px;line-height:17px;color:#000;left:86px;transform-origin:0 0;transform:scaleX(0.839);">AUDNZD&nbsp; (Australian Dollar vs New Zealand Dollar)</div>
<div style="z-index:21;left:53px;top:209px;width:11px;height:1px;border-top:1px dotted #777;"></div>
<svg style="z-index:21;left:64px;top:200px" width="17" height="17"><rect x="1" y="1" width="15" height="15" rx="3" fill="#f7d467" stroke="#b08a20"/><text x="8.5" y="13" font-size="11" fill="#7a5a00" text-anchor="middle" font-family="Liberation Sans">$</text></svg>
<div class="t" style="z-index:22;top:201.0px;font-size:12.5px;line-height:17px;color:#000;left:86px;transform-origin:0 0;transform:scaleX(0.835);">AUDSGD&nbsp; (Australian Dollar vs Singapore Dollar)</div>
<div style="z-index:21;left:53px;top:227px;width:11px;height:1px;border-top:1px dotted #777;"></div>
<svg style="z-index:21;left:64px;top:218px" width="17" height="17"><rect x="1" y="1" width="15" height="15" rx="3" fill="#f7d467" stroke="#b08a20"/><text x="8.5" y="13" font-size="11" fill="#7a5a00" text-anchor="middle" font-family="Liberation Sans">$</text></svg>
<div class="t" style="z-index:22;top:219.0px;font-size:12.5px;line-height:17px;color:#000;left:86px;transform-origin:0 0;transform:scaleX(0.829);">AUDUSD&nbsp; (Australian Dollar vs US Dollar)</div>
<div style="z-index:21;left:53px;top:245px;width:11px;height:1px;border-top:1px dotted #777;"></div>
<svg style="z-index:21;left:64px;top:236px" width="17" height="17"><rect x="1" y="1" width="15" height="15" rx="3" fill="#f7d467" stroke="#b08a20"/><text x="8.5" y="13" font-size="11" fill="#7a5a00" text-anchor="middle" font-family="Liberation Sans">$</text></svg>
<div class="t" style="z-index:22;top:237.0px;font-size:12.5px;line-height:17px;color:#000;left:86px;transform-origin:0 0;transform:scaleX(0.830);">CADCHF&nbsp; (Canadian Dollar vs Swiss Franc)</div>
<div style="z-index:21;left:53px;top:263px;width:11px;height:1px;border-top:1px dotted #777;"></div>
<svg style="z-index:21;left:64px;top:254px" width="17" height="17"><rect x="1" y="1" width="15" height="15" rx="3" fill="#f7d467" stroke="#b08a20"/><text x="8.5" y="13" font-size="11" fill="#7a5a00" text-anchor="middle" font-family="Liberation Sans">$</text></svg>
<div class="t" style="z-index:22;top:255.0px;font-size:12.5px;line-height:17px;color:#000;left:86px;transform-origin:0 0;transform:scaleX(0.837);">CADJPY&nbsp; (Canadian Dollar vs Japanese Yen)</div>
<div style="z-index:21;left:53px;top:281px;width:11px;height:1px;border-top:1px dotted #777;"></div>
<svg style="z-index:21;left:64px;top:272px" width="17" height="17"><rect x="1" y="1" width="15" height="15" rx="3" fill="#f7d467" stroke="#b08a20"/><text x="8.5" y="13" font-size="11" fill="#7a5a00" text-anchor="middle" font-family="Liberation Sans">$</text></svg>
<div class="t" style="z-index:22;top:273.0px;font-size:12.5px;line-height:17px;color:#000;left:86px;transform-origin:0 0;transform:scaleX(0.831);">CHFJPY&nbsp; (Swiss Frank vs Japanese Yen)</div>
<div style="z-index:21;left:53px;top:299px;width:11px;height:1px;border-top:1px dotted #777;"></div>
<svg style="z-index:21;left:64px;top:290px" width="17" height="17"><rect x="1" y="1" width="15" height="15" rx="3" fill="#f7d467" stroke="#b08a20"/><text x="8.5" y="13" font-size="11" fill="#7a5a00" text-anchor="middle" font-family="Liberation Sans">$</text></svg>
<div class="t" style="z-index:22;top:291.0px;font-size:12.5px;line-height:17px;color:#000;left:86px;transform-origin:0 0;transform:scaleX(0.823);">CHFPLN&nbsp; (Swiss Franc vs Polish Zloty)</div>
<div style="z-index:21;left:53px;top:317px;width:11px;height:1px;border-top:1px dotted #777;"></div>
<svg style="z-index:21;left:64px;top:308px" width="17" height="17"><rect x="1" y="1" width="15" height="15" rx="3" fill="#f7d467" stroke="#b08a20"/><text x="8.5" y="13" font-size="11" fill="#7a5a00" text-anchor="middle" font-family="Liberation Sans">$</text></svg>
<div class="t" style="z-index:22;top:309.0px;font-size:12.5px;line-height:17px;color:#000;left:86px;transform-origin:0 0;transform:scaleX(0.824);">CHFSGD&nbsp; (Swiss Frank vs Singapore Dollar)</div>
<svg style="z-index:21;left:64px;top:326px" width="17" height="4"><rect x="1" y="1" width="15" height="6" rx="3" fill="#f7d467" stroke="#b08a20"/></svg>
<div style="z-index:21;left:22px;top:107px;width:89px;height:27px;border:3px solid #ff0000;"></div>
<svg style="z-index:21;left:112px;top:98px" width="46" height="46"><circle cx="22.5" cy="22.5" r="20" fill="#ff0000"/><text x="22" y="31" font-size="25" fill="#fff" text-anchor="middle" font-family="Liberation Sans">11</text></svg>
<svg style="z-index:21;left:93px;top:110px" width="14" height="22"><path d="M1 1L1 17 5 13 8 20 10.5 19 7.5 12.5 13 12.5z" fill="#fff" stroke="#000" stroke-width="1"/></svg>
<div style="z-index:21;left:358px;top:91px;width:93px;height:21px;background:#fdfdfd;border:1px solid #d0d0d0;border-radius:4px;"></div>
<div class="t" style="z-index:22;top:93.0px;font-size:12.5px;line-height:17px;color:#000;left:404px;transform:translateX(-50%) scaleX(1.000);transform-origin:50% 0;">表示 (S)</div>
<div style="z-index:21;left:358px;top:119px;width:93px;height:21px;background:#fdfdfd;border:1px solid #d0d0d0;border-radius:4px;"></div>
<div class="t" style="z-index:22;top:121.0px;font-size:12.5px;line-height:17px;color:#000;left:404px;transform:translateX(-50%) scaleX(1.000);transform-origin:50% 0;">非表示 (H)</div>
<div style="z-index:21;left:358px;top:146px;width:93px;height:21px;background:#f5f5f5;border:1px solid #e0e0e0;border-radius:4px;"></div>
<div class="t" style="z-index:22;top:148.0px;font-size:12.5px;line-height:17px;color:#9a9a9a;left:404px;transform:translateX(-50%) scaleX(1.000);transform-origin:50% 0;">設定 (P)</div>
<div style="z-index:21;left:358px;top:326px;width:93px;height:21px;background:#fdfdfd;border:2px solid #0067c0;border-radius:4px;"></div>
<div class="t" style="z-index:22;top:328.0px;font-size:12.5px;line-height:17px;color:#000;left:404px;transform:translateX(-50%) scaleX(1.000);transform-origin:50% 0;">閉じる (C)</div>
</body></html>
